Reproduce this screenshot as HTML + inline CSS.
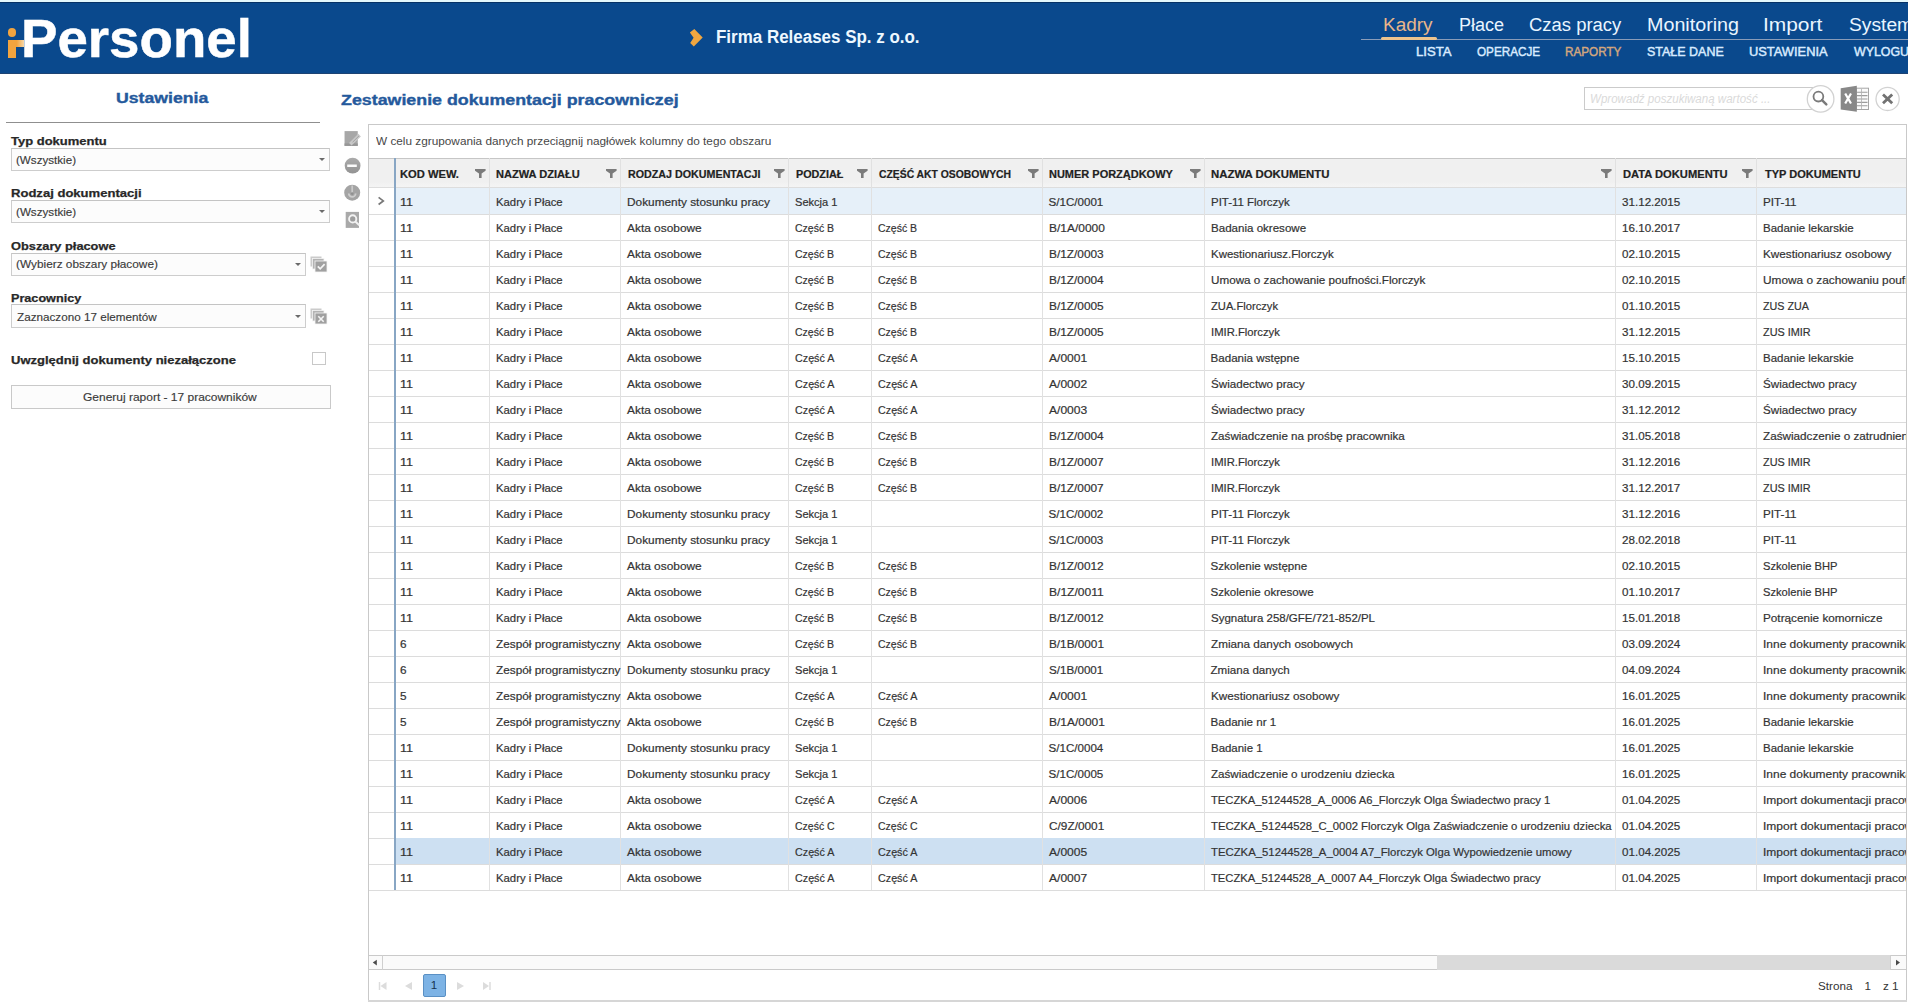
<!DOCTYPE html><html><head><meta charset="utf-8"><style>*{margin:0;padding:0;box-sizing:border-box}
html,body{width:1908px;height:1002px;overflow:hidden;background:#fff;font-family:"Liberation Sans",sans-serif}
body>div,body>svg{position:absolute}
.tx{position:absolute;height:0;line-height:0;white-space:nowrap}
.tx span{position:absolute;left:0;top:0;line-height:0;white-space:nowrap}
</style></head><body>
<div style="left:0;top:0;width:1908px;height:2px;background:#e4f8fc"></div>
<div style="left:0;top:2px;width:1908px;height:72px;background:#0a498d"></div>
<div style="left:0;top:2px;width:1908px;height:1px;background:#063266"></div>
<div style="left:0;top:73px;width:1908px;height:1px;background:#1d4373"></div>
<div style="left:7.5px;top:28.2px;width:8.4px;height:8.4px;border-radius:50%;background:#f2a43f"></div>
<div style="left:7.7px;top:40px;width:8.1px;height:17.7px;background:#f2a43f"></div>
<div style="left:7.7px;top:40px;width:16.5px;height:6.5px;background:linear-gradient(90deg,#f2a43f 55%,#f6d7a8)"></div>
<div class="tx" style="left:20.68px;top:38.62px;font-size:54.5px;font-weight:bold;font-style:normal;color:#ffffff;-webkit-text-stroke:0.5px #ffffff;transform:scaleX(1.0027);transform-origin:0 0"><span>Personel</span></div>
<svg style="position:absolute;left:689px;top:28px" width="15" height="20" viewBox="0 0 15 20"><path d="M0.9 4.4 L5.3 1.0 L13.7 9.6 L4.8 18.6 L1.2 15 L4.6 9.7 Z" fill="#f0a640"/></svg>
<div class="tx" style="left:716.34px;top:37.00px;font-size:18.75px;font-weight:bold;font-style:normal;color:#eef8ff;transform:scaleX(0.9044);transform-origin:0 0"><span>Firma Releases Sp. z o.o.</span></div>
<div class="tx" style="left:1383.02px;top:24.66px;font-size:18px;font-weight:normal;font-style:normal;color:#e8b68a;transform:scaleX(1.0545);transform-origin:0 0"><span>Kadry</span></div>
<div class="tx" style="left:1458.59px;top:24.66px;font-size:18px;font-weight:normal;font-style:normal;color:#e9f5ff;transform:scaleX(1.0026);transform-origin:0 0"><span>Płace</span></div>
<div class="tx" style="left:1529.24px;top:24.66px;font-size:18px;font-weight:normal;font-style:normal;color:#e9f5ff;transform:scaleX(1.0249);transform-origin:0 0"><span>Czas pracy</span></div>
<div class="tx" style="left:1647.06px;top:24.66px;font-size:18px;font-weight:normal;font-style:normal;color:#e9f5ff;transform:scaleX(1.0953);transform-origin:0 0"><span>Monitoring</span></div>
<div class="tx" style="left:1763.37px;top:24.66px;font-size:18px;font-weight:normal;font-style:normal;color:#e9f5ff;transform:scaleX(1.1617);transform-origin:0 0"><span>Import</span></div>
<div class="tx" style="left:1848.60px;top:24.66px;font-size:18px;font-weight:normal;font-style:normal;color:#e9f5ff;transform:scaleX(1.0678);transform-origin:0 0"><span>System</span></div>
<div style="left:1361px;top:38.5px;width:547px;height:1px;background:#8a9cb8"></div>
<div style="left:1380.5px;top:37px;width:56px;height:3px;background:#eec48e;border-radius:1.5px"></div>
<div class="tx" style="left:1415.97px;top:52.13px;font-size:12.9px;font-weight:normal;font-style:normal;color:#d9ebff;-webkit-text-stroke:0.45px #d9ebff;transform:scaleX(1.0193);transform-origin:0 0"><span>LISTA</span></div>
<div class="tx" style="left:1476.85px;top:52.13px;font-size:12.9px;font-weight:normal;font-style:normal;color:#d9ebff;-webkit-text-stroke:0.45px #d9ebff;transform:scaleX(0.9095);transform-origin:0 0"><span>OPERACJE</span></div>
<div class="tx" style="left:1565.08px;top:52.13px;font-size:12.9px;font-weight:normal;font-style:normal;color:#d3a77e;-webkit-text-stroke:0.45px #d3a77e;transform:scaleX(0.9085);transform-origin:0 0"><span>RAPORTY</span></div>
<div class="tx" style="left:1647.31px;top:52.13px;font-size:12.9px;font-weight:normal;font-style:normal;color:#d9ebff;-webkit-text-stroke:0.45px #d9ebff;transform:scaleX(0.9682);transform-origin:0 0"><span>STAŁE DANE</span></div>
<div class="tx" style="left:1748.80px;top:52.13px;font-size:12.9px;font-weight:normal;font-style:normal;color:#d9ebff;-webkit-text-stroke:0.45px #d9ebff;transform:scaleX(0.9975);transform-origin:0 0"><span>USTAWIENIA</span></div>
<div class="tx" style="left:1854.20px;top:52.13px;font-size:12.9px;font-weight:normal;font-style:normal;color:#d9ebff;-webkit-text-stroke:0.45px #d9ebff;transform:scaleX(0.9606);transform-origin:0 0"><span>WYLOGUJ</span></div>
<div class="tx" style="left:116.37px;top:97.71px;font-size:14.4px;font-weight:bold;font-style:normal;color:#24599c;-webkit-text-stroke:0.35px #24599c;transform:scaleX(1.2285);transform-origin:0 0"><span>Ustawienia</span></div>
<div style="left:6px;top:122px;width:314px;height:1px;background:#8f8f8f"></div>
<div class="tx" style="left:11.40px;top:141.02px;font-size:11.2px;font-weight:bold;font-style:normal;color:#282828;-webkit-text-stroke:0.25px #282828;transform:scaleX(1.1610);transform-origin:0 0"><span>Typ dokumentu</span></div>
<div class="tx" style="left:10.58px;top:193.12px;font-size:11.2px;font-weight:bold;font-style:normal;color:#282828;-webkit-text-stroke:0.25px #282828;transform:scaleX(1.1667);transform-origin:0 0"><span>Rodzaj dokumentacji</span></div>
<div class="tx" style="left:11.00px;top:245.92px;font-size:11.2px;font-weight:bold;font-style:normal;color:#282828;-webkit-text-stroke:0.25px #282828;transform:scaleX(1.1433);transform-origin:0 0"><span>Obszary płacowe</span></div>
<div class="tx" style="left:10.61px;top:297.92px;font-size:11.2px;font-weight:bold;font-style:normal;color:#282828;-webkit-text-stroke:0.25px #282828;transform:scaleX(1.1295);transform-origin:0 0"><span>Pracownicy</span></div>
<div class="tx" style="left:10.79px;top:360.02px;font-size:11.2px;font-weight:bold;font-style:normal;color:#282828;-webkit-text-stroke:0.25px #282828;transform:scaleX(1.1637);transform-origin:0 0"><span>Uwzględnij dokumenty niezałączone</span></div>
<div style="left:10.5px;top:148px;width:319.8px;height:23.400000000000006px;border:1px solid #cdcdcd;border-top-color:#c4c4c4;background:#fcfcfc"></div>
<div class="tx" style="left:16.46px;top:159.81px;font-size:11.8px;font-weight:normal;font-style:normal;color:#3a3a3a;-webkit-text-stroke:0.15px #3a3a3a;transform:scaleX(0.9850);transform-origin:0 0"><span>(Wszystkie)</span></div>
<div style="left:319.3px;top:158.2px;width:0;height:0;border-left:3px solid transparent;border-right:3px solid transparent;border-top:3px solid #6a6a6a"></div>
<div style="left:10.5px;top:199.9px;width:319.8px;height:23.5px;border:1px solid #cdcdcd;border-top-color:#c4c4c4;background:#fcfcfc"></div>
<div class="tx" style="left:16.45px;top:212.41px;font-size:11.8px;font-weight:normal;font-style:normal;color:#3a3a3a;-webkit-text-stroke:0.15px #3a3a3a;transform:scaleX(0.9867);transform-origin:0 0"><span>(Wszystkie)</span></div>
<div style="left:319.3px;top:210.15px;width:0;height:0;border-left:3px solid transparent;border-right:3px solid transparent;border-top:3px solid #6a6a6a"></div>
<div style="left:10.5px;top:252.6px;width:295.5px;height:23.299999999999983px;border:1px solid #cdcdcd;border-top-color:#c4c4c4;background:#fcfcfc"></div>
<div class="tx" style="left:16.45px;top:264.21px;font-size:11.8px;font-weight:normal;font-style:normal;color:#3a3a3a;-webkit-text-stroke:0.15px #3a3a3a;transform:scaleX(1.0030);transform-origin:0 0"><span>(Wybierz obszary płacowe)</span></div>
<div style="left:295px;top:262.75px;width:0;height:0;border-left:3px solid transparent;border-right:3px solid transparent;border-top:3px solid #6a6a6a"></div>
<div style="left:10.5px;top:304.4px;width:295.5px;height:24.100000000000023px;border:1px solid #cdcdcd;border-top-color:#c4c4c4;background:#fcfcfc"></div>
<div class="tx" style="left:16.63px;top:317.21px;font-size:11.8px;font-weight:normal;font-style:normal;color:#3a3a3a;-webkit-text-stroke:0.15px #3a3a3a;transform:scaleX(0.9914);transform-origin:0 0"><span>Zaznaczono 17 elementów</span></div>
<div style="left:295px;top:314.95px;width:0;height:0;border-left:3px solid transparent;border-right:3px solid transparent;border-top:3px solid #6a6a6a"></div>
<div style="left:312.3px;top:352.3px;width:13.5px;height:13px;border:1px solid #c8c8c8;background:#fff"></div>
<div style="left:10.5px;top:384.6px;width:320px;height:24px;border:1px solid #c9c9c9;background:#fcfcfc"></div>
<div class="tx" style="left:83.04px;top:396.88px;font-size:11.6px;font-weight:normal;font-style:normal;color:#3a3a3a;-webkit-text-stroke:0.15px #3a3a3a;transform:scaleX(1.0329);transform-origin:0 0"><span>Generuj raport - 17 pracowników</span></div>
<svg style="position:absolute;left:310px;top:255.5px" width="18" height="17" viewBox="0 0 18 17"><rect x="0.5" y="0.5" width="11" height="10" fill="#cbcbcb"/><rect x="2.5" y="2.5" width="11.5" height="10.5" fill="#b3b3b3" stroke="#f4f4f4" stroke-width="0.8"/><rect x="5" y="5" width="12" height="11" fill="#a0a0a0" stroke="#f4f4f4" stroke-width="0.8"/><path d="M7.8 10.3 L10.2 12.8 L14.6 8.2" stroke="#f4f4f4" stroke-width="1.7" fill="none"/></svg>
<svg style="position:absolute;left:310px;top:307.5px" width="18" height="17" viewBox="0 0 18 17"><rect x="0.5" y="0.5" width="11" height="10" fill="#cbcbcb"/><rect x="2.5" y="2.5" width="11.5" height="10.5" fill="#b3b3b3" stroke="#f4f4f4" stroke-width="0.8"/><rect x="5" y="5" width="12" height="11" fill="#a0a0a0" stroke="#f4f4f4" stroke-width="0.8"/><path d="M8.3 8.3 L13.7 13.7 M13.7 8.3 L8.3 13.7" stroke="#f4f4f4" stroke-width="1.6" fill="none"/></svg>
<div class="tx" style="left:340.92px;top:99.91px;font-size:14.1px;font-weight:bold;font-style:normal;color:#24599c;-webkit-text-stroke:0.35px #24599c;transform:scaleX(1.2640);transform-origin:0 0"><span>Zestawienie dokumentacji pracowniczej</span></div>
<svg style="position:absolute;left:344px;top:130px" width="17" height="18" viewBox="0 0 17 18"><rect x="0.55" y="1.1" width="13.2" height="14.8" fill="#a7a7a7"/><rect x="0.55" y="13.4" width="13.2" height="2.5" fill="#979797"/><path d="M6.3 14.3 L15.6 5.1" stroke="#c8c8c8" stroke-width="3.6"/><path d="M8.6 12.2 L15 5.9" stroke="#a2a2a2" stroke-width="1"/></svg>
<svg style="position:absolute;left:344px;top:157px" width="17" height="17" viewBox="0 0 17 17"><defs><linearGradient id="gm" x1="0" y1="0" x2="0" y2="1"><stop offset="0" stop-color="#ababab"/><stop offset="1" stop-color="#939393"/></linearGradient></defs><circle cx="8.6" cy="8.7" r="7.9" fill="url(#gm)"/><rect x="3.2" y="7.5" width="9.6" height="2.5" fill="#fbfbfb"/></svg>
<svg style="position:absolute;left:344px;top:184px" width="17" height="18" viewBox="0 0 17 18"><circle cx="8.2" cy="8.7" r="8" fill="#a4a4a4"/><path d="M8.2 1.5 V9.5" stroke="#c9c9c9" stroke-width="1.7"/><path d="M4.8 9.5 A3.4 3.4 0 0 0 11.6 9.5" stroke="#cdcdcd" stroke-width="1.8" fill="none"/><circle cx="8.2" cy="9.6" r="1.3" fill="#8f8f8f"/></svg>
<svg style="position:absolute;left:345px;top:211px" width="17" height="18" viewBox="0 0 17 18"><rect x="0.7" y="0.9" width="13.3" height="16" fill="#a9a9a9"/><circle cx="7.7" cy="7.9" r="3.6" stroke="#f2f2f2" stroke-width="1.9" fill="#9d9d9d"/><path d="M10.3 10.6 L14.3 14.3" stroke="#f2f2f2" stroke-width="2"/></svg>
<div style="left:1584.2px;top:87px;width:236px;height:23.3px;border:1px solid #cbcbcb;background:#fff"></div>
<div class="tx" style="left:1589.60px;top:99.34px;font-size:12px;font-weight:normal;font-style:italic;color:#dadada;transform:scaleX(0.9632);transform-origin:0 0"><span>Wprowadź poszukiwaną wartość ...</span></div>
<svg style="position:absolute;left:1805px;top:83px" width="32" height="32" viewBox="0 0 32 32"><circle cx="15.6" cy="15.9" r="13.3" fill="#fff" stroke="#d2d2d2" stroke-width="1.3"/><circle cx="13.4" cy="13.6" r="4.9" stroke="#7a7a7a" stroke-width="1.8" fill="none"/><path d="M17 17.2 L21.3 21.4" stroke="#7a7a7a" stroke-width="2.5" stroke-linecap="round"/></svg>
<svg style="position:absolute;left:1838px;top:83px" width="34" height="32" viewBox="0 0 34 32"><rect x="18.5" y="5.2" width="12" height="21.3" fill="#fbfbfb" stroke="#a5a5a5" stroke-width="1"/><path d="M19 9.2 H29.5 M19 12.6 H29.5 M19 16 H29.5 M19 19.4 H29.5 M19 22.8 H29.5" stroke="#9c9c9c" stroke-width="1.1"/><path d="M23.5 6 V26" stroke="#b0b0b0" stroke-width="0.8"/><path d="M2.7 5.2 L18.8 2.7 L18.8 28.7 L2.7 26.5 Z" fill="#888"/><path d="M7.2 10.5 L13 20.5 M13 10.5 L7.2 20.5" stroke="#fff" stroke-width="2.2"/></svg>
<svg style="position:absolute;left:1873px;top:85px" width="30" height="28" viewBox="0 0 30 28"><circle cx="14.6" cy="13.9" r="11.6" fill="#fff" stroke="#d2d2d2" stroke-width="1.3"/><path d="M10 9.5 L19.2 18.3 M19.2 9.5 L10 18.3" stroke="#727272" stroke-width="2.8"/></svg>
<div style="left:367.6px;top:124.1px;width:1539.2px;height:877.9px;border:1.3px solid #c9c9c9;border-bottom:none;background:#fff"></div>
<div class="tx" style="left:376.30px;top:140.99px;font-size:11px;font-weight:normal;font-style:normal;color:#474747;transform:scaleX(1.0720);transform-origin:0 0"><span>W celu zgrupowania danych przeciągnij nagłówek kolumny do tego obszaru</span></div>
<div style="left:369px;top:158.4px;width:1537px;height:29.599999999999994px;background:linear-gradient(#f0f0f0 0,#f0f0f0 78%,#f5f5f5 100%)"></div>
<div style="left:369px;top:157.8px;width:1537px;height:1.2px;background:#c6c6c6"></div>
<div style="left:369px;top:187.4px;width:1537px;height:1px;background:#dddddd"></div>
<div class="tx" style="left:400.20px;top:174.03px;font-size:10.6px;font-weight:bold;font-style:normal;color:#222222;-webkit-text-stroke:0.2px #222222;transform:scaleX(1.0540);transform-origin:0 0"><span>KOD WEW.</span></div>
<svg style="position:absolute;left:475px;top:168.8px" width="11" height="9.2" viewBox="0 0 11 9.2"><path d="M0 0 H10.6 V1.8 L6.6 4.6 V9.2 H4 V4.6 L0 1.8 Z" fill="#7b7b7b"/></svg>
<div class="tx" style="left:496.31px;top:174.03px;font-size:10.6px;font-weight:bold;font-style:normal;color:#222222;-webkit-text-stroke:0.2px #222222;transform:scaleX(1.0444);transform-origin:0 0"><span>NAZWA DZIAŁU</span></div>
<svg style="position:absolute;left:606px;top:168.8px" width="11" height="9.2" viewBox="0 0 11 9.2"><path d="M0 0 H10.6 V1.8 L6.6 4.6 V9.2 H4 V4.6 L0 1.8 Z" fill="#7b7b7b"/></svg>
<div class="tx" style="left:627.83px;top:174.03px;font-size:10.6px;font-weight:bold;font-style:normal;color:#222222;-webkit-text-stroke:0.2px #222222;transform:scaleX(1.0112);transform-origin:0 0"><span>RODZAJ DOKUMENTACJI</span></div>
<svg style="position:absolute;left:774px;top:168.8px" width="11" height="9.2" viewBox="0 0 11 9.2"><path d="M0 0 H10.6 V1.8 L6.6 4.6 V9.2 H4 V4.6 L0 1.8 Z" fill="#7b7b7b"/></svg>
<div class="tx" style="left:795.73px;top:174.03px;font-size:10.6px;font-weight:bold;font-style:normal;color:#222222;-webkit-text-stroke:0.2px #222222;transform:scaleX(1.0180);transform-origin:0 0"><span>PODZIAŁ</span></div>
<svg style="position:absolute;left:857px;top:168.8px" width="11" height="9.2" viewBox="0 0 11 9.2"><path d="M0 0 H10.6 V1.8 L6.6 4.6 V9.2 H4 V4.6 L0 1.8 Z" fill="#7b7b7b"/></svg>
<div class="tx" style="left:879.08px;top:174.03px;font-size:10.6px;font-weight:bold;font-style:normal;color:#222222;-webkit-text-stroke:0.2px #222222;transform:scaleX(0.9783);transform-origin:0 0"><span>CZĘŚĆ AKT OSOBOWYCH</span></div>
<svg style="position:absolute;left:1028px;top:168.8px" width="11" height="9.2" viewBox="0 0 11 9.2"><path d="M0 0 H10.6 V1.8 L6.6 4.6 V9.2 H4 V4.6 L0 1.8 Z" fill="#7b7b7b"/></svg>
<div class="tx" style="left:1048.71px;top:174.03px;font-size:10.6px;font-weight:bold;font-style:normal;color:#222222;-webkit-text-stroke:0.2px #222222;transform:scaleX(1.0365);transform-origin:0 0"><span>NUMER PORZĄDKOWY</span></div>
<svg style="position:absolute;left:1190px;top:168.8px" width="11" height="9.2" viewBox="0 0 11 9.2"><path d="M0 0 H10.6 V1.8 L6.6 4.6 V9.2 H4 V4.6 L0 1.8 Z" fill="#7b7b7b"/></svg>
<div class="tx" style="left:1211.49px;top:174.03px;font-size:10.6px;font-weight:bold;font-style:normal;color:#222222;-webkit-text-stroke:0.2px #222222;transform:scaleX(1.0748);transform-origin:0 0"><span>NAZWA DOKUMENTU</span></div>
<svg style="position:absolute;left:1601px;top:168.8px" width="11" height="9.2" viewBox="0 0 11 9.2"><path d="M0 0 H10.6 V1.8 L6.6 4.6 V9.2 H4 V4.6 L0 1.8 Z" fill="#7b7b7b"/></svg>
<div class="tx" style="left:1622.80px;top:174.03px;font-size:10.6px;font-weight:bold;font-style:normal;color:#222222;-webkit-text-stroke:0.2px #222222;transform:scaleX(1.0537);transform-origin:0 0"><span>DATA DOKUMENTU</span></div>
<svg style="position:absolute;left:1742px;top:168.8px" width="11" height="9.2" viewBox="0 0 11 9.2"><path d="M0 0 H10.6 V1.8 L6.6 4.6 V9.2 H4 V4.6 L0 1.8 Z" fill="#7b7b7b"/></svg>
<div class="tx" style="left:1764.50px;top:174.03px;font-size:10.6px;font-weight:bold;font-style:normal;color:#222222;-webkit-text-stroke:0.2px #222222;transform:scaleX(1.0389);transform-origin:0 0"><span>TYP DOKUMENTU</span></div>
<div style="left:396px;top:188.0px;width:1510px;height:26.0px;background:#e6f0f9"></div>
<div style="left:369px;top:214.0px;width:1537px;height:1px;background:#dcdcdc"></div>
<div style="left:369px;top:240.0px;width:1537px;height:1px;background:#dcdcdc"></div>
<div style="left:369px;top:266.0px;width:1537px;height:1px;background:#dcdcdc"></div>
<div style="left:369px;top:292.0px;width:1537px;height:1px;background:#dcdcdc"></div>
<div style="left:369px;top:318.0px;width:1537px;height:1px;background:#dcdcdc"></div>
<div style="left:369px;top:344.0px;width:1537px;height:1px;background:#dcdcdc"></div>
<div style="left:369px;top:370.0px;width:1537px;height:1px;background:#dcdcdc"></div>
<div style="left:369px;top:396.0px;width:1537px;height:1px;background:#dcdcdc"></div>
<div style="left:369px;top:422.0px;width:1537px;height:1px;background:#dcdcdc"></div>
<div style="left:369px;top:448.0px;width:1537px;height:1px;background:#dcdcdc"></div>
<div style="left:369px;top:474.0px;width:1537px;height:1px;background:#dcdcdc"></div>
<div style="left:369px;top:500.0px;width:1537px;height:1px;background:#dcdcdc"></div>
<div style="left:369px;top:526.0px;width:1537px;height:1px;background:#dcdcdc"></div>
<div style="left:369px;top:552.0px;width:1537px;height:1px;background:#dcdcdc"></div>
<div style="left:369px;top:578.0px;width:1537px;height:1px;background:#dcdcdc"></div>
<div style="left:369px;top:604.0px;width:1537px;height:1px;background:#dcdcdc"></div>
<div style="left:369px;top:630.0px;width:1537px;height:1px;background:#dcdcdc"></div>
<div style="left:369px;top:656.0px;width:1537px;height:1px;background:#dcdcdc"></div>
<div style="left:369px;top:682.0px;width:1537px;height:1px;background:#dcdcdc"></div>
<div style="left:369px;top:708.0px;width:1537px;height:1px;background:#dcdcdc"></div>
<div style="left:369px;top:734.0px;width:1537px;height:1px;background:#dcdcdc"></div>
<div style="left:369px;top:760.0px;width:1537px;height:1px;background:#dcdcdc"></div>
<div style="left:369px;top:786.0px;width:1537px;height:1px;background:#dcdcdc"></div>
<div style="left:369px;top:812.0px;width:1537px;height:1px;background:#dcdcdc"></div>
<div style="left:369px;top:838.0px;width:1537px;height:1px;background:#dcdcdc"></div>
<div style="left:396px;top:838.0px;width:1510px;height:26.0px;background:#cde0f2"></div>
<div style="left:369px;top:864.0px;width:1537px;height:1px;background:#dcdcdc"></div>
<div style="left:369px;top:890.0px;width:1537px;height:1px;background:#dcdcdc"></div>
<div style="left:489px;top:158.4px;width:1px;height:731.6px;background:#e1e1e1"></div>
<div style="left:620px;top:158.4px;width:1px;height:731.6px;background:#e1e1e1"></div>
<div style="left:788px;top:158.4px;width:1px;height:731.6px;background:#e1e1e1"></div>
<div style="left:871px;top:158.4px;width:1px;height:731.6px;background:#e1e1e1"></div>
<div style="left:1042px;top:158.4px;width:1px;height:731.6px;background:#e1e1e1"></div>
<div style="left:1204px;top:158.4px;width:1px;height:731.6px;background:#e1e1e1"></div>
<div style="left:1615px;top:158.4px;width:1px;height:731.6px;background:#e1e1e1"></div>
<div style="left:1756px;top:158.4px;width:1px;height:731.6px;background:#e1e1e1"></div>
<div style="left:394.3px;top:158.4px;width:1.6px;height:731.6px;background:#88a6c4"></div>
<svg style="position:absolute;left:377px;top:195.8px" width="9" height="10" viewBox="0 0 9 10"><path d="M1.6 1.3 L6.3 4.9 L1.6 8.5" stroke="#787878" stroke-width="1.7" fill="none"/></svg>
<div style="left:395px;top:188.0px;width:95px;height:26.0px;overflow:hidden"><div class="tx" style="left:4.60px;top:14.08px;font-size:11.6px;font-weight:normal;font-style:normal;color:#333333;-webkit-text-stroke:0.2px #333;transform:scaleX(1.0883);transform-origin:0 0"><span>11</span></div></div>
<div style="left:490px;top:188.0px;width:131px;height:26.0px;overflow:hidden"><div class="tx" style="left:5.50px;top:14.08px;font-size:11.6px;font-weight:normal;font-style:normal;color:#333333;-webkit-text-stroke:0.2px #333;transform:scaleX(0.9759);transform-origin:0 0"><span>Kadry i Płace</span></div></div>
<div style="left:621px;top:188.0px;width:168px;height:26.0px;overflow:hidden"><div class="tx" style="left:5.50px;top:14.08px;font-size:11.6px;font-weight:normal;font-style:normal;color:#333333;-webkit-text-stroke:0.2px #333;transform:scaleX(1.0214);transform-origin:0 0"><span>Dokumenty stosunku pracy</span></div></div>
<div style="left:789px;top:188.0px;width:83px;height:26.0px;overflow:hidden"><div class="tx" style="left:5.50px;top:14.08px;font-size:11.6px;font-weight:normal;font-style:normal;color:#333333;-webkit-text-stroke:0.2px #333;transform:scaleX(0.9551);transform-origin:0 0"><span>Sekcja 1</span></div></div>
<div style="left:1043px;top:188.0px;width:162px;height:26.0px;overflow:hidden"><div class="tx" style="left:5.50px;top:14.08px;font-size:11.6px;font-weight:normal;font-style:normal;color:#333333;-webkit-text-stroke:0.2px #333"><span>S/1C/0001</span></div></div>
<div style="left:1205px;top:188.0px;width:411px;height:26.0px;overflow:hidden"><div class="tx" style="left:5.50px;top:14.08px;font-size:11.6px;font-weight:normal;font-style:normal;color:#333333;-webkit-text-stroke:0.2px #333;transform:scaleX(0.9880);transform-origin:0 0"><span>PIT-11 Florczyk</span></div></div>
<div style="left:1616px;top:188.0px;width:141px;height:26.0px;overflow:hidden"><div class="tx" style="left:5.50px;top:14.08px;font-size:11.6px;font-weight:normal;font-style:normal;color:#333333;-webkit-text-stroke:0.2px #333;transform:scaleX(1.0033);transform-origin:0 0"><span>31.12.2015</span></div></div>
<div style="left:1757px;top:188.0px;width:149px;height:26.0px;overflow:hidden"><div class="tx" style="left:5.50px;top:14.08px;font-size:11.6px;font-weight:normal;font-style:normal;color:#333333;-webkit-text-stroke:0.2px #333;transform:scaleX(1.0059);transform-origin:0 0"><span>PIT-11</span></div></div>
<div style="left:395px;top:214.0px;width:95px;height:26.0px;overflow:hidden"><div class="tx" style="left:4.60px;top:14.08px;font-size:11.6px;font-weight:normal;font-style:normal;color:#333333;-webkit-text-stroke:0.2px #333;transform:scaleX(1.0883);transform-origin:0 0"><span>11</span></div></div>
<div style="left:490px;top:214.0px;width:131px;height:26.0px;overflow:hidden"><div class="tx" style="left:5.50px;top:14.08px;font-size:11.6px;font-weight:normal;font-style:normal;color:#333333;-webkit-text-stroke:0.2px #333;transform:scaleX(0.9759);transform-origin:0 0"><span>Kadry i Płace</span></div></div>
<div style="left:621px;top:214.0px;width:168px;height:26.0px;overflow:hidden"><div class="tx" style="left:5.50px;top:14.08px;font-size:11.6px;font-weight:normal;font-style:normal;color:#333333;-webkit-text-stroke:0.2px #333;transform:scaleX(1.0260);transform-origin:0 0"><span>Akta osobowe</span></div></div>
<div style="left:789px;top:214.0px;width:83px;height:26.0px;overflow:hidden"><div class="tx" style="left:5.50px;top:14.08px;font-size:11.6px;font-weight:normal;font-style:normal;color:#333333;-webkit-text-stroke:0.2px #333;transform:scaleX(0.9062);transform-origin:0 0"><span>Część B</span></div></div>
<div style="left:872px;top:214.0px;width:171px;height:26.0px;overflow:hidden"><div class="tx" style="left:5.50px;top:14.08px;font-size:11.6px;font-weight:normal;font-style:normal;color:#333333;-webkit-text-stroke:0.2px #333;transform:scaleX(0.9062);transform-origin:0 0"><span>Część B</span></div></div>
<div style="left:1043px;top:214.0px;width:162px;height:26.0px;overflow:hidden"><div class="tx" style="left:5.50px;top:14.08px;font-size:11.6px;font-weight:normal;font-style:normal;color:#333333;-webkit-text-stroke:0.2px #333;transform:scaleX(1.0308);transform-origin:0 0"><span>B/1A/0000</span></div></div>
<div style="left:1205px;top:214.0px;width:411px;height:26.0px;overflow:hidden"><div class="tx" style="left:5.50px;top:14.08px;font-size:11.6px;font-weight:normal;font-style:normal;color:#333333;-webkit-text-stroke:0.2px #333;transform:scaleX(0.9969);transform-origin:0 0"><span>Badania okresowe</span></div></div>
<div style="left:1616px;top:214.0px;width:141px;height:26.0px;overflow:hidden"><div class="tx" style="left:5.50px;top:14.08px;font-size:11.6px;font-weight:normal;font-style:normal;color:#333333;-webkit-text-stroke:0.2px #333;transform:scaleX(1.0033);transform-origin:0 0"><span>16.10.2017</span></div></div>
<div style="left:1757px;top:214.0px;width:149px;height:26.0px;overflow:hidden"><div class="tx" style="left:5.50px;top:14.08px;font-size:11.6px;font-weight:normal;font-style:normal;color:#333333;-webkit-text-stroke:0.2px #333;transform:scaleX(0.9900);transform-origin:0 0"><span>Badanie lekarskie</span></div></div>
<div style="left:395px;top:240.0px;width:95px;height:26.0px;overflow:hidden"><div class="tx" style="left:4.60px;top:14.08px;font-size:11.6px;font-weight:normal;font-style:normal;color:#333333;-webkit-text-stroke:0.2px #333;transform:scaleX(1.0883);transform-origin:0 0"><span>11</span></div></div>
<div style="left:490px;top:240.0px;width:131px;height:26.0px;overflow:hidden"><div class="tx" style="left:5.50px;top:14.08px;font-size:11.6px;font-weight:normal;font-style:normal;color:#333333;-webkit-text-stroke:0.2px #333;transform:scaleX(0.9759);transform-origin:0 0"><span>Kadry i Płace</span></div></div>
<div style="left:621px;top:240.0px;width:168px;height:26.0px;overflow:hidden"><div class="tx" style="left:5.50px;top:14.08px;font-size:11.6px;font-weight:normal;font-style:normal;color:#333333;-webkit-text-stroke:0.2px #333;transform:scaleX(1.0260);transform-origin:0 0"><span>Akta osobowe</span></div></div>
<div style="left:789px;top:240.0px;width:83px;height:26.0px;overflow:hidden"><div class="tx" style="left:5.50px;top:14.08px;font-size:11.6px;font-weight:normal;font-style:normal;color:#333333;-webkit-text-stroke:0.2px #333;transform:scaleX(0.9062);transform-origin:0 0"><span>Część B</span></div></div>
<div style="left:872px;top:240.0px;width:171px;height:26.0px;overflow:hidden"><div class="tx" style="left:5.50px;top:14.08px;font-size:11.6px;font-weight:normal;font-style:normal;color:#333333;-webkit-text-stroke:0.2px #333;transform:scaleX(0.9062);transform-origin:0 0"><span>Część B</span></div></div>
<div style="left:1043px;top:240.0px;width:162px;height:26.0px;overflow:hidden"><div class="tx" style="left:5.50px;top:14.08px;font-size:11.6px;font-weight:normal;font-style:normal;color:#333333;-webkit-text-stroke:0.2px #333;transform:scaleX(1.0226);transform-origin:0 0"><span>B/1Z/0003</span></div></div>
<div style="left:1205px;top:240.0px;width:411px;height:26.0px;overflow:hidden"><div class="tx" style="left:5.50px;top:14.08px;font-size:11.6px;font-weight:normal;font-style:normal;color:#333333;-webkit-text-stroke:0.2px #333;transform:scaleX(0.9869);transform-origin:0 0"><span>Kwestionariusz.Florczyk</span></div></div>
<div style="left:1616px;top:240.0px;width:141px;height:26.0px;overflow:hidden"><div class="tx" style="left:5.50px;top:14.08px;font-size:11.6px;font-weight:normal;font-style:normal;color:#333333;-webkit-text-stroke:0.2px #333;transform:scaleX(1.0033);transform-origin:0 0"><span>02.10.2015</span></div></div>
<div style="left:1757px;top:240.0px;width:149px;height:26.0px;overflow:hidden"><div class="tx" style="left:5.50px;top:14.08px;font-size:11.6px;font-weight:normal;font-style:normal;color:#333333;-webkit-text-stroke:0.2px #333;transform:scaleX(1.0105);transform-origin:0 0"><span>Kwestionariusz osobowy</span></div></div>
<div style="left:395px;top:266.0px;width:95px;height:26.0px;overflow:hidden"><div class="tx" style="left:4.60px;top:14.08px;font-size:11.6px;font-weight:normal;font-style:normal;color:#333333;-webkit-text-stroke:0.2px #333;transform:scaleX(1.0883);transform-origin:0 0"><span>11</span></div></div>
<div style="left:490px;top:266.0px;width:131px;height:26.0px;overflow:hidden"><div class="tx" style="left:5.50px;top:14.08px;font-size:11.6px;font-weight:normal;font-style:normal;color:#333333;-webkit-text-stroke:0.2px #333;transform:scaleX(0.9759);transform-origin:0 0"><span>Kadry i Płace</span></div></div>
<div style="left:621px;top:266.0px;width:168px;height:26.0px;overflow:hidden"><div class="tx" style="left:5.50px;top:14.08px;font-size:11.6px;font-weight:normal;font-style:normal;color:#333333;-webkit-text-stroke:0.2px #333;transform:scaleX(1.0260);transform-origin:0 0"><span>Akta osobowe</span></div></div>
<div style="left:789px;top:266.0px;width:83px;height:26.0px;overflow:hidden"><div class="tx" style="left:5.50px;top:14.08px;font-size:11.6px;font-weight:normal;font-style:normal;color:#333333;-webkit-text-stroke:0.2px #333;transform:scaleX(0.9062);transform-origin:0 0"><span>Część B</span></div></div>
<div style="left:872px;top:266.0px;width:171px;height:26.0px;overflow:hidden"><div class="tx" style="left:5.50px;top:14.08px;font-size:11.6px;font-weight:normal;font-style:normal;color:#333333;-webkit-text-stroke:0.2px #333;transform:scaleX(0.9062);transform-origin:0 0"><span>Część B</span></div></div>
<div style="left:1043px;top:266.0px;width:162px;height:26.0px;overflow:hidden"><div class="tx" style="left:5.50px;top:14.08px;font-size:11.6px;font-weight:normal;font-style:normal;color:#333333;-webkit-text-stroke:0.2px #333;transform:scaleX(1.0226);transform-origin:0 0"><span>B/1Z/0004</span></div></div>
<div style="left:1205px;top:266.0px;width:411px;height:26.0px;overflow:hidden"><div class="tx" style="left:5.50px;top:14.08px;font-size:11.6px;font-weight:normal;font-style:normal;color:#333333;-webkit-text-stroke:0.2px #333;transform:scaleX(1.0075);transform-origin:0 0"><span>Umowa o zachowanie poufności.Florczyk</span></div></div>
<div style="left:1616px;top:266.0px;width:141px;height:26.0px;overflow:hidden"><div class="tx" style="left:5.50px;top:14.08px;font-size:11.6px;font-weight:normal;font-style:normal;color:#333333;-webkit-text-stroke:0.2px #333;transform:scaleX(1.0033);transform-origin:0 0"><span>02.10.2015</span></div></div>
<div style="left:1757px;top:266.0px;width:149px;height:26.0px;overflow:hidden"><div class="tx" style="left:5.50px;top:14.08px;font-size:11.6px;font-weight:normal;font-style:normal;color:#333333;-webkit-text-stroke:0.2px #333;transform:scaleX(1.0210);transform-origin:0 0"><span>Umowa o zachowaniu poufności</span></div></div>
<div style="left:395px;top:292.0px;width:95px;height:26.0px;overflow:hidden"><div class="tx" style="left:4.60px;top:14.08px;font-size:11.6px;font-weight:normal;font-style:normal;color:#333333;-webkit-text-stroke:0.2px #333;transform:scaleX(1.0883);transform-origin:0 0"><span>11</span></div></div>
<div style="left:490px;top:292.0px;width:131px;height:26.0px;overflow:hidden"><div class="tx" style="left:5.50px;top:14.08px;font-size:11.6px;font-weight:normal;font-style:normal;color:#333333;-webkit-text-stroke:0.2px #333;transform:scaleX(0.9759);transform-origin:0 0"><span>Kadry i Płace</span></div></div>
<div style="left:621px;top:292.0px;width:168px;height:26.0px;overflow:hidden"><div class="tx" style="left:5.50px;top:14.08px;font-size:11.6px;font-weight:normal;font-style:normal;color:#333333;-webkit-text-stroke:0.2px #333;transform:scaleX(1.0260);transform-origin:0 0"><span>Akta osobowe</span></div></div>
<div style="left:789px;top:292.0px;width:83px;height:26.0px;overflow:hidden"><div class="tx" style="left:5.50px;top:14.08px;font-size:11.6px;font-weight:normal;font-style:normal;color:#333333;-webkit-text-stroke:0.2px #333;transform:scaleX(0.9062);transform-origin:0 0"><span>Część B</span></div></div>
<div style="left:872px;top:292.0px;width:171px;height:26.0px;overflow:hidden"><div class="tx" style="left:5.50px;top:14.08px;font-size:11.6px;font-weight:normal;font-style:normal;color:#333333;-webkit-text-stroke:0.2px #333;transform:scaleX(0.9062);transform-origin:0 0"><span>Część B</span></div></div>
<div style="left:1043px;top:292.0px;width:162px;height:26.0px;overflow:hidden"><div class="tx" style="left:5.50px;top:14.08px;font-size:11.6px;font-weight:normal;font-style:normal;color:#333333;-webkit-text-stroke:0.2px #333;transform:scaleX(1.0226);transform-origin:0 0"><span>B/1Z/0005</span></div></div>
<div style="left:1205px;top:292.0px;width:411px;height:26.0px;overflow:hidden"><div class="tx" style="left:5.50px;top:14.08px;font-size:11.6px;font-weight:normal;font-style:normal;color:#333333;-webkit-text-stroke:0.2px #333;transform:scaleX(0.9638);transform-origin:0 0"><span>ZUA.Florczyk</span></div></div>
<div style="left:1616px;top:292.0px;width:141px;height:26.0px;overflow:hidden"><div class="tx" style="left:5.50px;top:14.08px;font-size:11.6px;font-weight:normal;font-style:normal;color:#333333;-webkit-text-stroke:0.2px #333;transform:scaleX(1.0033);transform-origin:0 0"><span>01.10.2015</span></div></div>
<div style="left:1757px;top:292.0px;width:149px;height:26.0px;overflow:hidden"><div class="tx" style="left:5.50px;top:14.08px;font-size:11.6px;font-weight:normal;font-style:normal;color:#333333;-webkit-text-stroke:0.2px #333;transform:scaleX(0.9254);transform-origin:0 0"><span>ZUS ZUA</span></div></div>
<div style="left:395px;top:318.0px;width:95px;height:26.0px;overflow:hidden"><div class="tx" style="left:4.60px;top:14.08px;font-size:11.6px;font-weight:normal;font-style:normal;color:#333333;-webkit-text-stroke:0.2px #333;transform:scaleX(1.0883);transform-origin:0 0"><span>11</span></div></div>
<div style="left:490px;top:318.0px;width:131px;height:26.0px;overflow:hidden"><div class="tx" style="left:5.50px;top:14.08px;font-size:11.6px;font-weight:normal;font-style:normal;color:#333333;-webkit-text-stroke:0.2px #333;transform:scaleX(0.9759);transform-origin:0 0"><span>Kadry i Płace</span></div></div>
<div style="left:621px;top:318.0px;width:168px;height:26.0px;overflow:hidden"><div class="tx" style="left:5.50px;top:14.08px;font-size:11.6px;font-weight:normal;font-style:normal;color:#333333;-webkit-text-stroke:0.2px #333;transform:scaleX(1.0260);transform-origin:0 0"><span>Akta osobowe</span></div></div>
<div style="left:789px;top:318.0px;width:83px;height:26.0px;overflow:hidden"><div class="tx" style="left:5.50px;top:14.08px;font-size:11.6px;font-weight:normal;font-style:normal;color:#333333;-webkit-text-stroke:0.2px #333;transform:scaleX(0.9062);transform-origin:0 0"><span>Część B</span></div></div>
<div style="left:872px;top:318.0px;width:171px;height:26.0px;overflow:hidden"><div class="tx" style="left:5.50px;top:14.08px;font-size:11.6px;font-weight:normal;font-style:normal;color:#333333;-webkit-text-stroke:0.2px #333;transform:scaleX(0.9062);transform-origin:0 0"><span>Część B</span></div></div>
<div style="left:1043px;top:318.0px;width:162px;height:26.0px;overflow:hidden"><div class="tx" style="left:5.50px;top:14.08px;font-size:11.6px;font-weight:normal;font-style:normal;color:#333333;-webkit-text-stroke:0.2px #333;transform:scaleX(1.0226);transform-origin:0 0"><span>B/1Z/0005</span></div></div>
<div style="left:1205px;top:318.0px;width:411px;height:26.0px;overflow:hidden"><div class="tx" style="left:5.50px;top:14.08px;font-size:11.6px;font-weight:normal;font-style:normal;color:#333333;-webkit-text-stroke:0.2px #333;transform:scaleX(0.9712);transform-origin:0 0"><span>IMIR.Florczyk</span></div></div>
<div style="left:1616px;top:318.0px;width:141px;height:26.0px;overflow:hidden"><div class="tx" style="left:5.50px;top:14.08px;font-size:11.6px;font-weight:normal;font-style:normal;color:#333333;-webkit-text-stroke:0.2px #333;transform:scaleX(1.0033);transform-origin:0 0"><span>31.12.2015</span></div></div>
<div style="left:1757px;top:318.0px;width:149px;height:26.0px;overflow:hidden"><div class="tx" style="left:5.50px;top:14.08px;font-size:11.6px;font-weight:normal;font-style:normal;color:#333333;-webkit-text-stroke:0.2px #333;transform:scaleX(0.9367);transform-origin:0 0"><span>ZUS IMIR</span></div></div>
<div style="left:395px;top:344.0px;width:95px;height:26.0px;overflow:hidden"><div class="tx" style="left:4.60px;top:14.08px;font-size:11.6px;font-weight:normal;font-style:normal;color:#333333;-webkit-text-stroke:0.2px #333;transform:scaleX(1.0883);transform-origin:0 0"><span>11</span></div></div>
<div style="left:490px;top:344.0px;width:131px;height:26.0px;overflow:hidden"><div class="tx" style="left:5.50px;top:14.08px;font-size:11.6px;font-weight:normal;font-style:normal;color:#333333;-webkit-text-stroke:0.2px #333;transform:scaleX(0.9759);transform-origin:0 0"><span>Kadry i Płace</span></div></div>
<div style="left:621px;top:344.0px;width:168px;height:26.0px;overflow:hidden"><div class="tx" style="left:5.50px;top:14.08px;font-size:11.6px;font-weight:normal;font-style:normal;color:#333333;-webkit-text-stroke:0.2px #333;transform:scaleX(1.0260);transform-origin:0 0"><span>Akta osobowe</span></div></div>
<div style="left:789px;top:344.0px;width:83px;height:26.0px;overflow:hidden"><div class="tx" style="left:5.50px;top:14.08px;font-size:11.6px;font-weight:normal;font-style:normal;color:#333333;-webkit-text-stroke:0.2px #333;transform:scaleX(0.9263);transform-origin:0 0"><span>Część A</span></div></div>
<div style="left:872px;top:344.0px;width:171px;height:26.0px;overflow:hidden"><div class="tx" style="left:5.50px;top:14.08px;font-size:11.6px;font-weight:normal;font-style:normal;color:#333333;-webkit-text-stroke:0.2px #333;transform:scaleX(0.9263);transform-origin:0 0"><span>Część A</span></div></div>
<div style="left:1043px;top:344.0px;width:162px;height:26.0px;overflow:hidden"><div class="tx" style="left:5.50px;top:14.08px;font-size:11.6px;font-weight:normal;font-style:normal;color:#333333;-webkit-text-stroke:0.2px #333;transform:scaleX(1.0386);transform-origin:0 0"><span>A/0001</span></div></div>
<div style="left:1205px;top:344.0px;width:411px;height:26.0px;overflow:hidden"><div class="tx" style="left:5.50px;top:14.08px;font-size:11.6px;font-weight:normal;font-style:normal;color:#333333;-webkit-text-stroke:0.2px #333"><span>Badania wstępne</span></div></div>
<div style="left:1616px;top:344.0px;width:141px;height:26.0px;overflow:hidden"><div class="tx" style="left:5.50px;top:14.08px;font-size:11.6px;font-weight:normal;font-style:normal;color:#333333;-webkit-text-stroke:0.2px #333;transform:scaleX(1.0033);transform-origin:0 0"><span>15.10.2015</span></div></div>
<div style="left:1757px;top:344.0px;width:149px;height:26.0px;overflow:hidden"><div class="tx" style="left:5.50px;top:14.08px;font-size:11.6px;font-weight:normal;font-style:normal;color:#333333;-webkit-text-stroke:0.2px #333;transform:scaleX(0.9900);transform-origin:0 0"><span>Badanie lekarskie</span></div></div>
<div style="left:395px;top:370.0px;width:95px;height:26.0px;overflow:hidden"><div class="tx" style="left:4.60px;top:14.08px;font-size:11.6px;font-weight:normal;font-style:normal;color:#333333;-webkit-text-stroke:0.2px #333;transform:scaleX(1.0883);transform-origin:0 0"><span>11</span></div></div>
<div style="left:490px;top:370.0px;width:131px;height:26.0px;overflow:hidden"><div class="tx" style="left:5.50px;top:14.08px;font-size:11.6px;font-weight:normal;font-style:normal;color:#333333;-webkit-text-stroke:0.2px #333;transform:scaleX(0.9759);transform-origin:0 0"><span>Kadry i Płace</span></div></div>
<div style="left:621px;top:370.0px;width:168px;height:26.0px;overflow:hidden"><div class="tx" style="left:5.50px;top:14.08px;font-size:11.6px;font-weight:normal;font-style:normal;color:#333333;-webkit-text-stroke:0.2px #333;transform:scaleX(1.0260);transform-origin:0 0"><span>Akta osobowe</span></div></div>
<div style="left:789px;top:370.0px;width:83px;height:26.0px;overflow:hidden"><div class="tx" style="left:5.50px;top:14.08px;font-size:11.6px;font-weight:normal;font-style:normal;color:#333333;-webkit-text-stroke:0.2px #333;transform:scaleX(0.9263);transform-origin:0 0"><span>Część A</span></div></div>
<div style="left:872px;top:370.0px;width:171px;height:26.0px;overflow:hidden"><div class="tx" style="left:5.50px;top:14.08px;font-size:11.6px;font-weight:normal;font-style:normal;color:#333333;-webkit-text-stroke:0.2px #333;transform:scaleX(0.9263);transform-origin:0 0"><span>Część A</span></div></div>
<div style="left:1043px;top:370.0px;width:162px;height:26.0px;overflow:hidden"><div class="tx" style="left:5.50px;top:14.08px;font-size:11.6px;font-weight:normal;font-style:normal;color:#333333;-webkit-text-stroke:0.2px #333;transform:scaleX(1.0386);transform-origin:0 0"><span>A/0002</span></div></div>
<div style="left:1205px;top:370.0px;width:411px;height:26.0px;overflow:hidden"><div class="tx" style="left:5.50px;top:14.08px;font-size:11.6px;font-weight:normal;font-style:normal;color:#333333;-webkit-text-stroke:0.2px #333;transform:scaleX(1.0024);transform-origin:0 0"><span>Świadectwo pracy</span></div></div>
<div style="left:1616px;top:370.0px;width:141px;height:26.0px;overflow:hidden"><div class="tx" style="left:5.50px;top:14.08px;font-size:11.6px;font-weight:normal;font-style:normal;color:#333333;-webkit-text-stroke:0.2px #333;transform:scaleX(1.0033);transform-origin:0 0"><span>30.09.2015</span></div></div>
<div style="left:1757px;top:370.0px;width:149px;height:26.0px;overflow:hidden"><div class="tx" style="left:5.50px;top:14.08px;font-size:11.6px;font-weight:normal;font-style:normal;color:#333333;-webkit-text-stroke:0.2px #333;transform:scaleX(1.0024);transform-origin:0 0"><span>Świadectwo pracy</span></div></div>
<div style="left:395px;top:396.0px;width:95px;height:26.0px;overflow:hidden"><div class="tx" style="left:4.60px;top:14.08px;font-size:11.6px;font-weight:normal;font-style:normal;color:#333333;-webkit-text-stroke:0.2px #333;transform:scaleX(1.0883);transform-origin:0 0"><span>11</span></div></div>
<div style="left:490px;top:396.0px;width:131px;height:26.0px;overflow:hidden"><div class="tx" style="left:5.50px;top:14.08px;font-size:11.6px;font-weight:normal;font-style:normal;color:#333333;-webkit-text-stroke:0.2px #333;transform:scaleX(0.9759);transform-origin:0 0"><span>Kadry i Płace</span></div></div>
<div style="left:621px;top:396.0px;width:168px;height:26.0px;overflow:hidden"><div class="tx" style="left:5.50px;top:14.08px;font-size:11.6px;font-weight:normal;font-style:normal;color:#333333;-webkit-text-stroke:0.2px #333;transform:scaleX(1.0260);transform-origin:0 0"><span>Akta osobowe</span></div></div>
<div style="left:789px;top:396.0px;width:83px;height:26.0px;overflow:hidden"><div class="tx" style="left:5.50px;top:14.08px;font-size:11.6px;font-weight:normal;font-style:normal;color:#333333;-webkit-text-stroke:0.2px #333;transform:scaleX(0.9263);transform-origin:0 0"><span>Część A</span></div></div>
<div style="left:872px;top:396.0px;width:171px;height:26.0px;overflow:hidden"><div class="tx" style="left:5.50px;top:14.08px;font-size:11.6px;font-weight:normal;font-style:normal;color:#333333;-webkit-text-stroke:0.2px #333;transform:scaleX(0.9263);transform-origin:0 0"><span>Część A</span></div></div>
<div style="left:1043px;top:396.0px;width:162px;height:26.0px;overflow:hidden"><div class="tx" style="left:5.50px;top:14.08px;font-size:11.6px;font-weight:normal;font-style:normal;color:#333333;-webkit-text-stroke:0.2px #333;transform:scaleX(1.0386);transform-origin:0 0"><span>A/0003</span></div></div>
<div style="left:1205px;top:396.0px;width:411px;height:26.0px;overflow:hidden"><div class="tx" style="left:5.50px;top:14.08px;font-size:11.6px;font-weight:normal;font-style:normal;color:#333333;-webkit-text-stroke:0.2px #333;transform:scaleX(1.0024);transform-origin:0 0"><span>Świadectwo pracy</span></div></div>
<div style="left:1616px;top:396.0px;width:141px;height:26.0px;overflow:hidden"><div class="tx" style="left:5.50px;top:14.08px;font-size:11.6px;font-weight:normal;font-style:normal;color:#333333;-webkit-text-stroke:0.2px #333;transform:scaleX(1.0033);transform-origin:0 0"><span>31.12.2012</span></div></div>
<div style="left:1757px;top:396.0px;width:149px;height:26.0px;overflow:hidden"><div class="tx" style="left:5.50px;top:14.08px;font-size:11.6px;font-weight:normal;font-style:normal;color:#333333;-webkit-text-stroke:0.2px #333;transform:scaleX(1.0024);transform-origin:0 0"><span>Świadectwo pracy</span></div></div>
<div style="left:395px;top:422.0px;width:95px;height:26.0px;overflow:hidden"><div class="tx" style="left:4.60px;top:14.08px;font-size:11.6px;font-weight:normal;font-style:normal;color:#333333;-webkit-text-stroke:0.2px #333;transform:scaleX(1.0883);transform-origin:0 0"><span>11</span></div></div>
<div style="left:490px;top:422.0px;width:131px;height:26.0px;overflow:hidden"><div class="tx" style="left:5.50px;top:14.08px;font-size:11.6px;font-weight:normal;font-style:normal;color:#333333;-webkit-text-stroke:0.2px #333;transform:scaleX(0.9759);transform-origin:0 0"><span>Kadry i Płace</span></div></div>
<div style="left:621px;top:422.0px;width:168px;height:26.0px;overflow:hidden"><div class="tx" style="left:5.50px;top:14.08px;font-size:11.6px;font-weight:normal;font-style:normal;color:#333333;-webkit-text-stroke:0.2px #333;transform:scaleX(1.0260);transform-origin:0 0"><span>Akta osobowe</span></div></div>
<div style="left:789px;top:422.0px;width:83px;height:26.0px;overflow:hidden"><div class="tx" style="left:5.50px;top:14.08px;font-size:11.6px;font-weight:normal;font-style:normal;color:#333333;-webkit-text-stroke:0.2px #333;transform:scaleX(0.9062);transform-origin:0 0"><span>Część B</span></div></div>
<div style="left:872px;top:422.0px;width:171px;height:26.0px;overflow:hidden"><div class="tx" style="left:5.50px;top:14.08px;font-size:11.6px;font-weight:normal;font-style:normal;color:#333333;-webkit-text-stroke:0.2px #333;transform:scaleX(0.9062);transform-origin:0 0"><span>Część B</span></div></div>
<div style="left:1043px;top:422.0px;width:162px;height:26.0px;overflow:hidden"><div class="tx" style="left:5.50px;top:14.08px;font-size:11.6px;font-weight:normal;font-style:normal;color:#333333;-webkit-text-stroke:0.2px #333;transform:scaleX(1.0226);transform-origin:0 0"><span>B/1Z/0004</span></div></div>
<div style="left:1205px;top:422.0px;width:411px;height:26.0px;overflow:hidden"><div class="tx" style="left:5.50px;top:14.08px;font-size:11.6px;font-weight:normal;font-style:normal;color:#333333;-webkit-text-stroke:0.2px #333;transform:scaleX(1.0026);transform-origin:0 0"><span>Zaświadczenie na prośbę pracownika</span></div></div>
<div style="left:1616px;top:422.0px;width:141px;height:26.0px;overflow:hidden"><div class="tx" style="left:5.50px;top:14.08px;font-size:11.6px;font-weight:normal;font-style:normal;color:#333333;-webkit-text-stroke:0.2px #333;transform:scaleX(1.0033);transform-origin:0 0"><span>31.05.2018</span></div></div>
<div style="left:1757px;top:422.0px;width:149px;height:26.0px;overflow:hidden"><div class="tx" style="left:5.50px;top:14.08px;font-size:11.6px;font-weight:normal;font-style:normal;color:#333333;-webkit-text-stroke:0.2px #333;transform:scaleX(1.0093);transform-origin:0 0"><span>Zaświadczenie o zatrudnieniu</span></div></div>
<div style="left:395px;top:448.0px;width:95px;height:26.0px;overflow:hidden"><div class="tx" style="left:4.60px;top:14.08px;font-size:11.6px;font-weight:normal;font-style:normal;color:#333333;-webkit-text-stroke:0.2px #333;transform:scaleX(1.0883);transform-origin:0 0"><span>11</span></div></div>
<div style="left:490px;top:448.0px;width:131px;height:26.0px;overflow:hidden"><div class="tx" style="left:5.50px;top:14.08px;font-size:11.6px;font-weight:normal;font-style:normal;color:#333333;-webkit-text-stroke:0.2px #333;transform:scaleX(0.9759);transform-origin:0 0"><span>Kadry i Płace</span></div></div>
<div style="left:621px;top:448.0px;width:168px;height:26.0px;overflow:hidden"><div class="tx" style="left:5.50px;top:14.08px;font-size:11.6px;font-weight:normal;font-style:normal;color:#333333;-webkit-text-stroke:0.2px #333;transform:scaleX(1.0260);transform-origin:0 0"><span>Akta osobowe</span></div></div>
<div style="left:789px;top:448.0px;width:83px;height:26.0px;overflow:hidden"><div class="tx" style="left:5.50px;top:14.08px;font-size:11.6px;font-weight:normal;font-style:normal;color:#333333;-webkit-text-stroke:0.2px #333;transform:scaleX(0.9062);transform-origin:0 0"><span>Część B</span></div></div>
<div style="left:872px;top:448.0px;width:171px;height:26.0px;overflow:hidden"><div class="tx" style="left:5.50px;top:14.08px;font-size:11.6px;font-weight:normal;font-style:normal;color:#333333;-webkit-text-stroke:0.2px #333;transform:scaleX(0.9062);transform-origin:0 0"><span>Część B</span></div></div>
<div style="left:1043px;top:448.0px;width:162px;height:26.0px;overflow:hidden"><div class="tx" style="left:5.50px;top:14.08px;font-size:11.6px;font-weight:normal;font-style:normal;color:#333333;-webkit-text-stroke:0.2px #333;transform:scaleX(1.0226);transform-origin:0 0"><span>B/1Z/0007</span></div></div>
<div style="left:1205px;top:448.0px;width:411px;height:26.0px;overflow:hidden"><div class="tx" style="left:5.50px;top:14.08px;font-size:11.6px;font-weight:normal;font-style:normal;color:#333333;-webkit-text-stroke:0.2px #333;transform:scaleX(0.9712);transform-origin:0 0"><span>IMIR.Florczyk</span></div></div>
<div style="left:1616px;top:448.0px;width:141px;height:26.0px;overflow:hidden"><div class="tx" style="left:5.50px;top:14.08px;font-size:11.6px;font-weight:normal;font-style:normal;color:#333333;-webkit-text-stroke:0.2px #333;transform:scaleX(1.0033);transform-origin:0 0"><span>31.12.2016</span></div></div>
<div style="left:1757px;top:448.0px;width:149px;height:26.0px;overflow:hidden"><div class="tx" style="left:5.50px;top:14.08px;font-size:11.6px;font-weight:normal;font-style:normal;color:#333333;-webkit-text-stroke:0.2px #333;transform:scaleX(0.9367);transform-origin:0 0"><span>ZUS IMIR</span></div></div>
<div style="left:395px;top:474.0px;width:95px;height:26.0px;overflow:hidden"><div class="tx" style="left:4.60px;top:14.08px;font-size:11.6px;font-weight:normal;font-style:normal;color:#333333;-webkit-text-stroke:0.2px #333;transform:scaleX(1.0883);transform-origin:0 0"><span>11</span></div></div>
<div style="left:490px;top:474.0px;width:131px;height:26.0px;overflow:hidden"><div class="tx" style="left:5.50px;top:14.08px;font-size:11.6px;font-weight:normal;font-style:normal;color:#333333;-webkit-text-stroke:0.2px #333;transform:scaleX(0.9759);transform-origin:0 0"><span>Kadry i Płace</span></div></div>
<div style="left:621px;top:474.0px;width:168px;height:26.0px;overflow:hidden"><div class="tx" style="left:5.50px;top:14.08px;font-size:11.6px;font-weight:normal;font-style:normal;color:#333333;-webkit-text-stroke:0.2px #333;transform:scaleX(1.0260);transform-origin:0 0"><span>Akta osobowe</span></div></div>
<div style="left:789px;top:474.0px;width:83px;height:26.0px;overflow:hidden"><div class="tx" style="left:5.50px;top:14.08px;font-size:11.6px;font-weight:normal;font-style:normal;color:#333333;-webkit-text-stroke:0.2px #333;transform:scaleX(0.9062);transform-origin:0 0"><span>Część B</span></div></div>
<div style="left:872px;top:474.0px;width:171px;height:26.0px;overflow:hidden"><div class="tx" style="left:5.50px;top:14.08px;font-size:11.6px;font-weight:normal;font-style:normal;color:#333333;-webkit-text-stroke:0.2px #333;transform:scaleX(0.9062);transform-origin:0 0"><span>Część B</span></div></div>
<div style="left:1043px;top:474.0px;width:162px;height:26.0px;overflow:hidden"><div class="tx" style="left:5.50px;top:14.08px;font-size:11.6px;font-weight:normal;font-style:normal;color:#333333;-webkit-text-stroke:0.2px #333;transform:scaleX(1.0226);transform-origin:0 0"><span>B/1Z/0007</span></div></div>
<div style="left:1205px;top:474.0px;width:411px;height:26.0px;overflow:hidden"><div class="tx" style="left:5.50px;top:14.08px;font-size:11.6px;font-weight:normal;font-style:normal;color:#333333;-webkit-text-stroke:0.2px #333;transform:scaleX(0.9712);transform-origin:0 0"><span>IMIR.Florczyk</span></div></div>
<div style="left:1616px;top:474.0px;width:141px;height:26.0px;overflow:hidden"><div class="tx" style="left:5.50px;top:14.08px;font-size:11.6px;font-weight:normal;font-style:normal;color:#333333;-webkit-text-stroke:0.2px #333;transform:scaleX(1.0033);transform-origin:0 0"><span>31.12.2017</span></div></div>
<div style="left:1757px;top:474.0px;width:149px;height:26.0px;overflow:hidden"><div class="tx" style="left:5.50px;top:14.08px;font-size:11.6px;font-weight:normal;font-style:normal;color:#333333;-webkit-text-stroke:0.2px #333;transform:scaleX(0.9367);transform-origin:0 0"><span>ZUS IMIR</span></div></div>
<div style="left:395px;top:500.0px;width:95px;height:26.0px;overflow:hidden"><div class="tx" style="left:4.60px;top:14.08px;font-size:11.6px;font-weight:normal;font-style:normal;color:#333333;-webkit-text-stroke:0.2px #333;transform:scaleX(1.0883);transform-origin:0 0"><span>11</span></div></div>
<div style="left:490px;top:500.0px;width:131px;height:26.0px;overflow:hidden"><div class="tx" style="left:5.50px;top:14.08px;font-size:11.6px;font-weight:normal;font-style:normal;color:#333333;-webkit-text-stroke:0.2px #333;transform:scaleX(0.9759);transform-origin:0 0"><span>Kadry i Płace</span></div></div>
<div style="left:621px;top:500.0px;width:168px;height:26.0px;overflow:hidden"><div class="tx" style="left:5.50px;top:14.08px;font-size:11.6px;font-weight:normal;font-style:normal;color:#333333;-webkit-text-stroke:0.2px #333;transform:scaleX(1.0214);transform-origin:0 0"><span>Dokumenty stosunku pracy</span></div></div>
<div style="left:789px;top:500.0px;width:83px;height:26.0px;overflow:hidden"><div class="tx" style="left:5.50px;top:14.08px;font-size:11.6px;font-weight:normal;font-style:normal;color:#333333;-webkit-text-stroke:0.2px #333;transform:scaleX(0.9551);transform-origin:0 0"><span>Sekcja 1</span></div></div>
<div style="left:1043px;top:500.0px;width:162px;height:26.0px;overflow:hidden"><div class="tx" style="left:5.50px;top:14.08px;font-size:11.6px;font-weight:normal;font-style:normal;color:#333333;-webkit-text-stroke:0.2px #333"><span>S/1C/0002</span></div></div>
<div style="left:1205px;top:500.0px;width:411px;height:26.0px;overflow:hidden"><div class="tx" style="left:5.50px;top:14.08px;font-size:11.6px;font-weight:normal;font-style:normal;color:#333333;-webkit-text-stroke:0.2px #333;transform:scaleX(0.9880);transform-origin:0 0"><span>PIT-11 Florczyk</span></div></div>
<div style="left:1616px;top:500.0px;width:141px;height:26.0px;overflow:hidden"><div class="tx" style="left:5.50px;top:14.08px;font-size:11.6px;font-weight:normal;font-style:normal;color:#333333;-webkit-text-stroke:0.2px #333;transform:scaleX(1.0033);transform-origin:0 0"><span>31.12.2016</span></div></div>
<div style="left:1757px;top:500.0px;width:149px;height:26.0px;overflow:hidden"><div class="tx" style="left:5.50px;top:14.08px;font-size:11.6px;font-weight:normal;font-style:normal;color:#333333;-webkit-text-stroke:0.2px #333;transform:scaleX(1.0059);transform-origin:0 0"><span>PIT-11</span></div></div>
<div style="left:395px;top:526.0px;width:95px;height:26.0px;overflow:hidden"><div class="tx" style="left:4.60px;top:14.08px;font-size:11.6px;font-weight:normal;font-style:normal;color:#333333;-webkit-text-stroke:0.2px #333;transform:scaleX(1.0883);transform-origin:0 0"><span>11</span></div></div>
<div style="left:490px;top:526.0px;width:131px;height:26.0px;overflow:hidden"><div class="tx" style="left:5.50px;top:14.08px;font-size:11.6px;font-weight:normal;font-style:normal;color:#333333;-webkit-text-stroke:0.2px #333;transform:scaleX(0.9759);transform-origin:0 0"><span>Kadry i Płace</span></div></div>
<div style="left:621px;top:526.0px;width:168px;height:26.0px;overflow:hidden"><div class="tx" style="left:5.50px;top:14.08px;font-size:11.6px;font-weight:normal;font-style:normal;color:#333333;-webkit-text-stroke:0.2px #333;transform:scaleX(1.0214);transform-origin:0 0"><span>Dokumenty stosunku pracy</span></div></div>
<div style="left:789px;top:526.0px;width:83px;height:26.0px;overflow:hidden"><div class="tx" style="left:5.50px;top:14.08px;font-size:11.6px;font-weight:normal;font-style:normal;color:#333333;-webkit-text-stroke:0.2px #333;transform:scaleX(0.9551);transform-origin:0 0"><span>Sekcja 1</span></div></div>
<div style="left:1043px;top:526.0px;width:162px;height:26.0px;overflow:hidden"><div class="tx" style="left:5.50px;top:14.08px;font-size:11.6px;font-weight:normal;font-style:normal;color:#333333;-webkit-text-stroke:0.2px #333"><span>S/1C/0003</span></div></div>
<div style="left:1205px;top:526.0px;width:411px;height:26.0px;overflow:hidden"><div class="tx" style="left:5.50px;top:14.08px;font-size:11.6px;font-weight:normal;font-style:normal;color:#333333;-webkit-text-stroke:0.2px #333;transform:scaleX(0.9880);transform-origin:0 0"><span>PIT-11 Florczyk</span></div></div>
<div style="left:1616px;top:526.0px;width:141px;height:26.0px;overflow:hidden"><div class="tx" style="left:5.50px;top:14.08px;font-size:11.6px;font-weight:normal;font-style:normal;color:#333333;-webkit-text-stroke:0.2px #333;transform:scaleX(1.0033);transform-origin:0 0"><span>28.02.2018</span></div></div>
<div style="left:1757px;top:526.0px;width:149px;height:26.0px;overflow:hidden"><div class="tx" style="left:5.50px;top:14.08px;font-size:11.6px;font-weight:normal;font-style:normal;color:#333333;-webkit-text-stroke:0.2px #333;transform:scaleX(1.0059);transform-origin:0 0"><span>PIT-11</span></div></div>
<div style="left:395px;top:552.0px;width:95px;height:26.0px;overflow:hidden"><div class="tx" style="left:4.60px;top:14.08px;font-size:11.6px;font-weight:normal;font-style:normal;color:#333333;-webkit-text-stroke:0.2px #333;transform:scaleX(1.0883);transform-origin:0 0"><span>11</span></div></div>
<div style="left:490px;top:552.0px;width:131px;height:26.0px;overflow:hidden"><div class="tx" style="left:5.50px;top:14.08px;font-size:11.6px;font-weight:normal;font-style:normal;color:#333333;-webkit-text-stroke:0.2px #333;transform:scaleX(0.9759);transform-origin:0 0"><span>Kadry i Płace</span></div></div>
<div style="left:621px;top:552.0px;width:168px;height:26.0px;overflow:hidden"><div class="tx" style="left:5.50px;top:14.08px;font-size:11.6px;font-weight:normal;font-style:normal;color:#333333;-webkit-text-stroke:0.2px #333;transform:scaleX(1.0260);transform-origin:0 0"><span>Akta osobowe</span></div></div>
<div style="left:789px;top:552.0px;width:83px;height:26.0px;overflow:hidden"><div class="tx" style="left:5.50px;top:14.08px;font-size:11.6px;font-weight:normal;font-style:normal;color:#333333;-webkit-text-stroke:0.2px #333;transform:scaleX(0.9062);transform-origin:0 0"><span>Część B</span></div></div>
<div style="left:872px;top:552.0px;width:171px;height:26.0px;overflow:hidden"><div class="tx" style="left:5.50px;top:14.08px;font-size:11.6px;font-weight:normal;font-style:normal;color:#333333;-webkit-text-stroke:0.2px #333;transform:scaleX(0.9062);transform-origin:0 0"><span>Część B</span></div></div>
<div style="left:1043px;top:552.0px;width:162px;height:26.0px;overflow:hidden"><div class="tx" style="left:5.50px;top:14.08px;font-size:11.6px;font-weight:normal;font-style:normal;color:#333333;-webkit-text-stroke:0.2px #333;transform:scaleX(1.0226);transform-origin:0 0"><span>B/1Z/0012</span></div></div>
<div style="left:1205px;top:552.0px;width:411px;height:26.0px;overflow:hidden"><div class="tx" style="left:5.50px;top:14.08px;font-size:11.6px;font-weight:normal;font-style:normal;color:#333333;-webkit-text-stroke:0.2px #333"><span>Szkolenie wstępne</span></div></div>
<div style="left:1616px;top:552.0px;width:141px;height:26.0px;overflow:hidden"><div class="tx" style="left:5.50px;top:14.08px;font-size:11.6px;font-weight:normal;font-style:normal;color:#333333;-webkit-text-stroke:0.2px #333;transform:scaleX(1.0033);transform-origin:0 0"><span>02.10.2015</span></div></div>
<div style="left:1757px;top:552.0px;width:149px;height:26.0px;overflow:hidden"><div class="tx" style="left:5.50px;top:14.08px;font-size:11.6px;font-weight:normal;font-style:normal;color:#333333;-webkit-text-stroke:0.2px #333;transform:scaleX(0.9620);transform-origin:0 0"><span>Szkolenie BHP</span></div></div>
<div style="left:395px;top:578.0px;width:95px;height:26.0px;overflow:hidden"><div class="tx" style="left:4.60px;top:14.08px;font-size:11.6px;font-weight:normal;font-style:normal;color:#333333;-webkit-text-stroke:0.2px #333;transform:scaleX(1.0883);transform-origin:0 0"><span>11</span></div></div>
<div style="left:490px;top:578.0px;width:131px;height:26.0px;overflow:hidden"><div class="tx" style="left:5.50px;top:14.08px;font-size:11.6px;font-weight:normal;font-style:normal;color:#333333;-webkit-text-stroke:0.2px #333;transform:scaleX(0.9759);transform-origin:0 0"><span>Kadry i Płace</span></div></div>
<div style="left:621px;top:578.0px;width:168px;height:26.0px;overflow:hidden"><div class="tx" style="left:5.50px;top:14.08px;font-size:11.6px;font-weight:normal;font-style:normal;color:#333333;-webkit-text-stroke:0.2px #333;transform:scaleX(1.0260);transform-origin:0 0"><span>Akta osobowe</span></div></div>
<div style="left:789px;top:578.0px;width:83px;height:26.0px;overflow:hidden"><div class="tx" style="left:5.50px;top:14.08px;font-size:11.6px;font-weight:normal;font-style:normal;color:#333333;-webkit-text-stroke:0.2px #333;transform:scaleX(0.9062);transform-origin:0 0"><span>Część B</span></div></div>
<div style="left:872px;top:578.0px;width:171px;height:26.0px;overflow:hidden"><div class="tx" style="left:5.50px;top:14.08px;font-size:11.6px;font-weight:normal;font-style:normal;color:#333333;-webkit-text-stroke:0.2px #333;transform:scaleX(0.9062);transform-origin:0 0"><span>Część B</span></div></div>
<div style="left:1043px;top:578.0px;width:162px;height:26.0px;overflow:hidden"><div class="tx" style="left:5.50px;top:14.08px;font-size:11.6px;font-weight:normal;font-style:normal;color:#333333;-webkit-text-stroke:0.2px #333;transform:scaleX(1.0393);transform-origin:0 0"><span>B/1Z/0011</span></div></div>
<div style="left:1205px;top:578.0px;width:411px;height:26.0px;overflow:hidden"><div class="tx" style="left:5.50px;top:14.08px;font-size:11.6px;font-weight:normal;font-style:normal;color:#333333;-webkit-text-stroke:0.2px #333"><span>Szkolenie okresowe</span></div></div>
<div style="left:1616px;top:578.0px;width:141px;height:26.0px;overflow:hidden"><div class="tx" style="left:5.50px;top:14.08px;font-size:11.6px;font-weight:normal;font-style:normal;color:#333333;-webkit-text-stroke:0.2px #333;transform:scaleX(1.0033);transform-origin:0 0"><span>01.10.2017</span></div></div>
<div style="left:1757px;top:578.0px;width:149px;height:26.0px;overflow:hidden"><div class="tx" style="left:5.50px;top:14.08px;font-size:11.6px;font-weight:normal;font-style:normal;color:#333333;-webkit-text-stroke:0.2px #333;transform:scaleX(0.9620);transform-origin:0 0"><span>Szkolenie BHP</span></div></div>
<div style="left:395px;top:604.0px;width:95px;height:26.0px;overflow:hidden"><div class="tx" style="left:4.60px;top:14.08px;font-size:11.6px;font-weight:normal;font-style:normal;color:#333333;-webkit-text-stroke:0.2px #333;transform:scaleX(1.0883);transform-origin:0 0"><span>11</span></div></div>
<div style="left:490px;top:604.0px;width:131px;height:26.0px;overflow:hidden"><div class="tx" style="left:5.50px;top:14.08px;font-size:11.6px;font-weight:normal;font-style:normal;color:#333333;-webkit-text-stroke:0.2px #333;transform:scaleX(0.9759);transform-origin:0 0"><span>Kadry i Płace</span></div></div>
<div style="left:621px;top:604.0px;width:168px;height:26.0px;overflow:hidden"><div class="tx" style="left:5.50px;top:14.08px;font-size:11.6px;font-weight:normal;font-style:normal;color:#333333;-webkit-text-stroke:0.2px #333;transform:scaleX(1.0260);transform-origin:0 0"><span>Akta osobowe</span></div></div>
<div style="left:789px;top:604.0px;width:83px;height:26.0px;overflow:hidden"><div class="tx" style="left:5.50px;top:14.08px;font-size:11.6px;font-weight:normal;font-style:normal;color:#333333;-webkit-text-stroke:0.2px #333;transform:scaleX(0.9062);transform-origin:0 0"><span>Część B</span></div></div>
<div style="left:872px;top:604.0px;width:171px;height:26.0px;overflow:hidden"><div class="tx" style="left:5.50px;top:14.08px;font-size:11.6px;font-weight:normal;font-style:normal;color:#333333;-webkit-text-stroke:0.2px #333;transform:scaleX(0.9062);transform-origin:0 0"><span>Część B</span></div></div>
<div style="left:1043px;top:604.0px;width:162px;height:26.0px;overflow:hidden"><div class="tx" style="left:5.50px;top:14.08px;font-size:11.6px;font-weight:normal;font-style:normal;color:#333333;-webkit-text-stroke:0.2px #333;transform:scaleX(1.0226);transform-origin:0 0"><span>B/1Z/0012</span></div></div>
<div style="left:1205px;top:604.0px;width:411px;height:26.0px;overflow:hidden"><div class="tx" style="left:5.50px;top:14.08px;font-size:11.6px;font-weight:normal;font-style:normal;color:#333333;-webkit-text-stroke:0.2px #333;transform:scaleX(0.9901);transform-origin:0 0"><span>Sygnatura 258/GFE/721-852/PL</span></div></div>
<div style="left:1616px;top:604.0px;width:141px;height:26.0px;overflow:hidden"><div class="tx" style="left:5.50px;top:14.08px;font-size:11.6px;font-weight:normal;font-style:normal;color:#333333;-webkit-text-stroke:0.2px #333;transform:scaleX(1.0033);transform-origin:0 0"><span>15.01.2018</span></div></div>
<div style="left:1757px;top:604.0px;width:149px;height:26.0px;overflow:hidden"><div class="tx" style="left:5.50px;top:14.08px;font-size:11.6px;font-weight:normal;font-style:normal;color:#333333;-webkit-text-stroke:0.2px #333;transform:scaleX(1.0129);transform-origin:0 0"><span>Potrącenie komornicze</span></div></div>
<div style="left:395px;top:630.0px;width:95px;height:26.0px;overflow:hidden"><div class="tx" style="left:4.60px;top:14.08px;font-size:11.6px;font-weight:normal;font-style:normal;color:#333333;-webkit-text-stroke:0.2px #333;transform:scaleX(1.0157);transform-origin:0 0"><span>6</span></div></div>
<div style="left:490px;top:630.0px;width:131px;height:26.0px;overflow:hidden"><div class="tx" style="left:5.50px;top:14.08px;font-size:11.6px;font-weight:normal;font-style:normal;color:#333333;-webkit-text-stroke:0.2px #333;transform:scaleX(1.0165);transform-origin:0 0"><span>Zespół programistyczny</span></div></div>
<div style="left:621px;top:630.0px;width:168px;height:26.0px;overflow:hidden"><div class="tx" style="left:5.50px;top:14.08px;font-size:11.6px;font-weight:normal;font-style:normal;color:#333333;-webkit-text-stroke:0.2px #333;transform:scaleX(1.0260);transform-origin:0 0"><span>Akta osobowe</span></div></div>
<div style="left:789px;top:630.0px;width:83px;height:26.0px;overflow:hidden"><div class="tx" style="left:5.50px;top:14.08px;font-size:11.6px;font-weight:normal;font-style:normal;color:#333333;-webkit-text-stroke:0.2px #333;transform:scaleX(0.9062);transform-origin:0 0"><span>Część B</span></div></div>
<div style="left:872px;top:630.0px;width:171px;height:26.0px;overflow:hidden"><div class="tx" style="left:5.50px;top:14.08px;font-size:11.6px;font-weight:normal;font-style:normal;color:#333333;-webkit-text-stroke:0.2px #333;transform:scaleX(0.9062);transform-origin:0 0"><span>Część B</span></div></div>
<div style="left:1043px;top:630.0px;width:162px;height:26.0px;overflow:hidden"><div class="tx" style="left:5.50px;top:14.08px;font-size:11.6px;font-weight:normal;font-style:normal;color:#333333;-webkit-text-stroke:0.2px #333;transform:scaleX(1.0147);transform-origin:0 0"><span>B/1B/0001</span></div></div>
<div style="left:1205px;top:630.0px;width:411px;height:26.0px;overflow:hidden"><div class="tx" style="left:5.50px;top:14.08px;font-size:11.6px;font-weight:normal;font-style:normal;color:#333333;-webkit-text-stroke:0.2px #333;transform:scaleX(1.0108);transform-origin:0 0"><span>Zmiana danych osobowych</span></div></div>
<div style="left:1616px;top:630.0px;width:141px;height:26.0px;overflow:hidden"><div class="tx" style="left:5.50px;top:14.08px;font-size:11.6px;font-weight:normal;font-style:normal;color:#333333;-webkit-text-stroke:0.2px #333;transform:scaleX(1.0033);transform-origin:0 0"><span>03.09.2024</span></div></div>
<div style="left:1757px;top:630.0px;width:149px;height:26.0px;overflow:hidden"><div class="tx" style="left:5.50px;top:14.08px;font-size:11.6px;font-weight:normal;font-style:normal;color:#333333;-webkit-text-stroke:0.2px #333;transform:scaleX(1.0316);transform-origin:0 0"><span>Inne dokumenty pracownika</span></div></div>
<div style="left:395px;top:656.0px;width:95px;height:26.0px;overflow:hidden"><div class="tx" style="left:4.60px;top:14.08px;font-size:11.6px;font-weight:normal;font-style:normal;color:#333333;-webkit-text-stroke:0.2px #333;transform:scaleX(1.0157);transform-origin:0 0"><span>6</span></div></div>
<div style="left:490px;top:656.0px;width:131px;height:26.0px;overflow:hidden"><div class="tx" style="left:5.50px;top:14.08px;font-size:11.6px;font-weight:normal;font-style:normal;color:#333333;-webkit-text-stroke:0.2px #333;transform:scaleX(1.0165);transform-origin:0 0"><span>Zespół programistyczny</span></div></div>
<div style="left:621px;top:656.0px;width:168px;height:26.0px;overflow:hidden"><div class="tx" style="left:5.50px;top:14.08px;font-size:11.6px;font-weight:normal;font-style:normal;color:#333333;-webkit-text-stroke:0.2px #333;transform:scaleX(1.0214);transform-origin:0 0"><span>Dokumenty stosunku pracy</span></div></div>
<div style="left:789px;top:656.0px;width:83px;height:26.0px;overflow:hidden"><div class="tx" style="left:5.50px;top:14.08px;font-size:11.6px;font-weight:normal;font-style:normal;color:#333333;-webkit-text-stroke:0.2px #333;transform:scaleX(0.9551);transform-origin:0 0"><span>Sekcja 1</span></div></div>
<div style="left:1043px;top:656.0px;width:162px;height:26.0px;overflow:hidden"><div class="tx" style="left:5.50px;top:14.08px;font-size:11.6px;font-weight:normal;font-style:normal;color:#333333;-webkit-text-stroke:0.2px #333;transform:scaleX(1.0027);transform-origin:0 0"><span>S/1B/0001</span></div></div>
<div style="left:1205px;top:656.0px;width:411px;height:26.0px;overflow:hidden"><div class="tx" style="left:5.50px;top:14.08px;font-size:11.6px;font-weight:normal;font-style:normal;color:#333333;-webkit-text-stroke:0.2px #333"><span>Zmiana danych</span></div></div>
<div style="left:1616px;top:656.0px;width:141px;height:26.0px;overflow:hidden"><div class="tx" style="left:5.50px;top:14.08px;font-size:11.6px;font-weight:normal;font-style:normal;color:#333333;-webkit-text-stroke:0.2px #333;transform:scaleX(1.0033);transform-origin:0 0"><span>04.09.2024</span></div></div>
<div style="left:1757px;top:656.0px;width:149px;height:26.0px;overflow:hidden"><div class="tx" style="left:5.50px;top:14.08px;font-size:11.6px;font-weight:normal;font-style:normal;color:#333333;-webkit-text-stroke:0.2px #333;transform:scaleX(1.0316);transform-origin:0 0"><span>Inne dokumenty pracownika</span></div></div>
<div style="left:395px;top:682.0px;width:95px;height:26.0px;overflow:hidden"><div class="tx" style="left:4.60px;top:14.08px;font-size:11.6px;font-weight:normal;font-style:normal;color:#333333;-webkit-text-stroke:0.2px #333;transform:scaleX(1.0157);transform-origin:0 0"><span>5</span></div></div>
<div style="left:490px;top:682.0px;width:131px;height:26.0px;overflow:hidden"><div class="tx" style="left:5.50px;top:14.08px;font-size:11.6px;font-weight:normal;font-style:normal;color:#333333;-webkit-text-stroke:0.2px #333;transform:scaleX(1.0165);transform-origin:0 0"><span>Zespół programistyczny</span></div></div>
<div style="left:621px;top:682.0px;width:168px;height:26.0px;overflow:hidden"><div class="tx" style="left:5.50px;top:14.08px;font-size:11.6px;font-weight:normal;font-style:normal;color:#333333;-webkit-text-stroke:0.2px #333;transform:scaleX(1.0260);transform-origin:0 0"><span>Akta osobowe</span></div></div>
<div style="left:789px;top:682.0px;width:83px;height:26.0px;overflow:hidden"><div class="tx" style="left:5.50px;top:14.08px;font-size:11.6px;font-weight:normal;font-style:normal;color:#333333;-webkit-text-stroke:0.2px #333;transform:scaleX(0.9263);transform-origin:0 0"><span>Część A</span></div></div>
<div style="left:872px;top:682.0px;width:171px;height:26.0px;overflow:hidden"><div class="tx" style="left:5.50px;top:14.08px;font-size:11.6px;font-weight:normal;font-style:normal;color:#333333;-webkit-text-stroke:0.2px #333;transform:scaleX(0.9263);transform-origin:0 0"><span>Część A</span></div></div>
<div style="left:1043px;top:682.0px;width:162px;height:26.0px;overflow:hidden"><div class="tx" style="left:5.50px;top:14.08px;font-size:11.6px;font-weight:normal;font-style:normal;color:#333333;-webkit-text-stroke:0.2px #333;transform:scaleX(1.0386);transform-origin:0 0"><span>A/0001</span></div></div>
<div style="left:1205px;top:682.0px;width:411px;height:26.0px;overflow:hidden"><div class="tx" style="left:5.50px;top:14.08px;font-size:11.6px;font-weight:normal;font-style:normal;color:#333333;-webkit-text-stroke:0.2px #333;transform:scaleX(1.0105);transform-origin:0 0"><span>Kwestionariusz osobowy</span></div></div>
<div style="left:1616px;top:682.0px;width:141px;height:26.0px;overflow:hidden"><div class="tx" style="left:5.50px;top:14.08px;font-size:11.6px;font-weight:normal;font-style:normal;color:#333333;-webkit-text-stroke:0.2px #333;transform:scaleX(1.0033);transform-origin:0 0"><span>16.01.2025</span></div></div>
<div style="left:1757px;top:682.0px;width:149px;height:26.0px;overflow:hidden"><div class="tx" style="left:5.50px;top:14.08px;font-size:11.6px;font-weight:normal;font-style:normal;color:#333333;-webkit-text-stroke:0.2px #333;transform:scaleX(1.0316);transform-origin:0 0"><span>Inne dokumenty pracownika</span></div></div>
<div style="left:395px;top:708.0px;width:95px;height:26.0px;overflow:hidden"><div class="tx" style="left:4.60px;top:14.08px;font-size:11.6px;font-weight:normal;font-style:normal;color:#333333;-webkit-text-stroke:0.2px #333;transform:scaleX(1.0157);transform-origin:0 0"><span>5</span></div></div>
<div style="left:490px;top:708.0px;width:131px;height:26.0px;overflow:hidden"><div class="tx" style="left:5.50px;top:14.08px;font-size:11.6px;font-weight:normal;font-style:normal;color:#333333;-webkit-text-stroke:0.2px #333;transform:scaleX(1.0165);transform-origin:0 0"><span>Zespół programistyczny</span></div></div>
<div style="left:621px;top:708.0px;width:168px;height:26.0px;overflow:hidden"><div class="tx" style="left:5.50px;top:14.08px;font-size:11.6px;font-weight:normal;font-style:normal;color:#333333;-webkit-text-stroke:0.2px #333;transform:scaleX(1.0260);transform-origin:0 0"><span>Akta osobowe</span></div></div>
<div style="left:789px;top:708.0px;width:83px;height:26.0px;overflow:hidden"><div class="tx" style="left:5.50px;top:14.08px;font-size:11.6px;font-weight:normal;font-style:normal;color:#333333;-webkit-text-stroke:0.2px #333;transform:scaleX(0.9062);transform-origin:0 0"><span>Część B</span></div></div>
<div style="left:872px;top:708.0px;width:171px;height:26.0px;overflow:hidden"><div class="tx" style="left:5.50px;top:14.08px;font-size:11.6px;font-weight:normal;font-style:normal;color:#333333;-webkit-text-stroke:0.2px #333;transform:scaleX(0.9062);transform-origin:0 0"><span>Część B</span></div></div>
<div style="left:1043px;top:708.0px;width:162px;height:26.0px;overflow:hidden"><div class="tx" style="left:5.50px;top:14.08px;font-size:11.6px;font-weight:normal;font-style:normal;color:#333333;-webkit-text-stroke:0.2px #333;transform:scaleX(1.0308);transform-origin:0 0"><span>B/1A/0001</span></div></div>
<div style="left:1205px;top:708.0px;width:411px;height:26.0px;overflow:hidden"><div class="tx" style="left:5.50px;top:14.08px;font-size:11.6px;font-weight:normal;font-style:normal;color:#333333;-webkit-text-stroke:0.2px #333"><span>Badanie nr 1</span></div></div>
<div style="left:1616px;top:708.0px;width:141px;height:26.0px;overflow:hidden"><div class="tx" style="left:5.50px;top:14.08px;font-size:11.6px;font-weight:normal;font-style:normal;color:#333333;-webkit-text-stroke:0.2px #333;transform:scaleX(1.0033);transform-origin:0 0"><span>16.01.2025</span></div></div>
<div style="left:1757px;top:708.0px;width:149px;height:26.0px;overflow:hidden"><div class="tx" style="left:5.50px;top:14.08px;font-size:11.6px;font-weight:normal;font-style:normal;color:#333333;-webkit-text-stroke:0.2px #333;transform:scaleX(0.9900);transform-origin:0 0"><span>Badanie lekarskie</span></div></div>
<div style="left:395px;top:734.0px;width:95px;height:26.0px;overflow:hidden"><div class="tx" style="left:4.60px;top:14.08px;font-size:11.6px;font-weight:normal;font-style:normal;color:#333333;-webkit-text-stroke:0.2px #333;transform:scaleX(1.0883);transform-origin:0 0"><span>11</span></div></div>
<div style="left:490px;top:734.0px;width:131px;height:26.0px;overflow:hidden"><div class="tx" style="left:5.50px;top:14.08px;font-size:11.6px;font-weight:normal;font-style:normal;color:#333333;-webkit-text-stroke:0.2px #333;transform:scaleX(0.9759);transform-origin:0 0"><span>Kadry i Płace</span></div></div>
<div style="left:621px;top:734.0px;width:168px;height:26.0px;overflow:hidden"><div class="tx" style="left:5.50px;top:14.08px;font-size:11.6px;font-weight:normal;font-style:normal;color:#333333;-webkit-text-stroke:0.2px #333;transform:scaleX(1.0214);transform-origin:0 0"><span>Dokumenty stosunku pracy</span></div></div>
<div style="left:789px;top:734.0px;width:83px;height:26.0px;overflow:hidden"><div class="tx" style="left:5.50px;top:14.08px;font-size:11.6px;font-weight:normal;font-style:normal;color:#333333;-webkit-text-stroke:0.2px #333;transform:scaleX(0.9551);transform-origin:0 0"><span>Sekcja 1</span></div></div>
<div style="left:1043px;top:734.0px;width:162px;height:26.0px;overflow:hidden"><div class="tx" style="left:5.50px;top:14.08px;font-size:11.6px;font-weight:normal;font-style:normal;color:#333333;-webkit-text-stroke:0.2px #333"><span>S/1C/0004</span></div></div>
<div style="left:1205px;top:734.0px;width:411px;height:26.0px;overflow:hidden"><div class="tx" style="left:5.50px;top:14.08px;font-size:11.6px;font-weight:normal;font-style:normal;color:#333333;-webkit-text-stroke:0.2px #333;transform:scaleX(0.9876);transform-origin:0 0"><span>Badanie 1</span></div></div>
<div style="left:1616px;top:734.0px;width:141px;height:26.0px;overflow:hidden"><div class="tx" style="left:5.50px;top:14.08px;font-size:11.6px;font-weight:normal;font-style:normal;color:#333333;-webkit-text-stroke:0.2px #333;transform:scaleX(1.0033);transform-origin:0 0"><span>16.01.2025</span></div></div>
<div style="left:1757px;top:734.0px;width:149px;height:26.0px;overflow:hidden"><div class="tx" style="left:5.50px;top:14.08px;font-size:11.6px;font-weight:normal;font-style:normal;color:#333333;-webkit-text-stroke:0.2px #333;transform:scaleX(0.9900);transform-origin:0 0"><span>Badanie lekarskie</span></div></div>
<div style="left:395px;top:760.0px;width:95px;height:26.0px;overflow:hidden"><div class="tx" style="left:4.60px;top:14.08px;font-size:11.6px;font-weight:normal;font-style:normal;color:#333333;-webkit-text-stroke:0.2px #333;transform:scaleX(1.0883);transform-origin:0 0"><span>11</span></div></div>
<div style="left:490px;top:760.0px;width:131px;height:26.0px;overflow:hidden"><div class="tx" style="left:5.50px;top:14.08px;font-size:11.6px;font-weight:normal;font-style:normal;color:#333333;-webkit-text-stroke:0.2px #333;transform:scaleX(0.9759);transform-origin:0 0"><span>Kadry i Płace</span></div></div>
<div style="left:621px;top:760.0px;width:168px;height:26.0px;overflow:hidden"><div class="tx" style="left:5.50px;top:14.08px;font-size:11.6px;font-weight:normal;font-style:normal;color:#333333;-webkit-text-stroke:0.2px #333;transform:scaleX(1.0214);transform-origin:0 0"><span>Dokumenty stosunku pracy</span></div></div>
<div style="left:789px;top:760.0px;width:83px;height:26.0px;overflow:hidden"><div class="tx" style="left:5.50px;top:14.08px;font-size:11.6px;font-weight:normal;font-style:normal;color:#333333;-webkit-text-stroke:0.2px #333;transform:scaleX(0.9551);transform-origin:0 0"><span>Sekcja 1</span></div></div>
<div style="left:1043px;top:760.0px;width:162px;height:26.0px;overflow:hidden"><div class="tx" style="left:5.50px;top:14.08px;font-size:11.6px;font-weight:normal;font-style:normal;color:#333333;-webkit-text-stroke:0.2px #333"><span>S/1C/0005</span></div></div>
<div style="left:1205px;top:760.0px;width:411px;height:26.0px;overflow:hidden"><div class="tx" style="left:5.50px;top:14.08px;font-size:11.6px;font-weight:normal;font-style:normal;color:#333333;-webkit-text-stroke:0.2px #333;transform:scaleX(1.0021);transform-origin:0 0"><span>Zaświadczenie o urodzeniu dziecka</span></div></div>
<div style="left:1616px;top:760.0px;width:141px;height:26.0px;overflow:hidden"><div class="tx" style="left:5.50px;top:14.08px;font-size:11.6px;font-weight:normal;font-style:normal;color:#333333;-webkit-text-stroke:0.2px #333;transform:scaleX(1.0033);transform-origin:0 0"><span>16.01.2025</span></div></div>
<div style="left:1757px;top:760.0px;width:149px;height:26.0px;overflow:hidden"><div class="tx" style="left:5.50px;top:14.08px;font-size:11.6px;font-weight:normal;font-style:normal;color:#333333;-webkit-text-stroke:0.2px #333;transform:scaleX(1.0316);transform-origin:0 0"><span>Inne dokumenty pracownika</span></div></div>
<div style="left:395px;top:786.0px;width:95px;height:26.0px;overflow:hidden"><div class="tx" style="left:4.60px;top:14.08px;font-size:11.6px;font-weight:normal;font-style:normal;color:#333333;-webkit-text-stroke:0.2px #333;transform:scaleX(1.0883);transform-origin:0 0"><span>11</span></div></div>
<div style="left:490px;top:786.0px;width:131px;height:26.0px;overflow:hidden"><div class="tx" style="left:5.50px;top:14.08px;font-size:11.6px;font-weight:normal;font-style:normal;color:#333333;-webkit-text-stroke:0.2px #333;transform:scaleX(0.9759);transform-origin:0 0"><span>Kadry i Płace</span></div></div>
<div style="left:621px;top:786.0px;width:168px;height:26.0px;overflow:hidden"><div class="tx" style="left:5.50px;top:14.08px;font-size:11.6px;font-weight:normal;font-style:normal;color:#333333;-webkit-text-stroke:0.2px #333;transform:scaleX(1.0260);transform-origin:0 0"><span>Akta osobowe</span></div></div>
<div style="left:789px;top:786.0px;width:83px;height:26.0px;overflow:hidden"><div class="tx" style="left:5.50px;top:14.08px;font-size:11.6px;font-weight:normal;font-style:normal;color:#333333;-webkit-text-stroke:0.2px #333;transform:scaleX(0.9263);transform-origin:0 0"><span>Część A</span></div></div>
<div style="left:872px;top:786.0px;width:171px;height:26.0px;overflow:hidden"><div class="tx" style="left:5.50px;top:14.08px;font-size:11.6px;font-weight:normal;font-style:normal;color:#333333;-webkit-text-stroke:0.2px #333;transform:scaleX(0.9263);transform-origin:0 0"><span>Część A</span></div></div>
<div style="left:1043px;top:786.0px;width:162px;height:26.0px;overflow:hidden"><div class="tx" style="left:5.50px;top:14.08px;font-size:11.6px;font-weight:normal;font-style:normal;color:#333333;-webkit-text-stroke:0.2px #333;transform:scaleX(1.0386);transform-origin:0 0"><span>A/0006</span></div></div>
<div style="left:1205px;top:786.0px;width:411px;height:26.0px;overflow:hidden"><div class="tx" style="left:5.50px;top:14.08px;font-size:11.6px;font-weight:normal;font-style:normal;color:#333333;-webkit-text-stroke:0.2px #333;transform:scaleX(0.9679);transform-origin:0 0"><span>TECZKA_51244528_A_0006 A6_Florczyk Olga Świadectwo pracy 1</span></div></div>
<div style="left:1616px;top:786.0px;width:141px;height:26.0px;overflow:hidden"><div class="tx" style="left:5.50px;top:14.08px;font-size:11.6px;font-weight:normal;font-style:normal;color:#333333;-webkit-text-stroke:0.2px #333;transform:scaleX(1.0033);transform-origin:0 0"><span>01.04.2025</span></div></div>
<div style="left:1757px;top:786.0px;width:149px;height:26.0px;overflow:hidden"><div class="tx" style="left:5.50px;top:14.08px;font-size:11.6px;font-weight:normal;font-style:normal;color:#333333;-webkit-text-stroke:0.2px #333;transform:scaleX(1.0365);transform-origin:0 0"><span>Import dokumentacji pracowniczej</span></div></div>
<div style="left:395px;top:812.0px;width:95px;height:26.0px;overflow:hidden"><div class="tx" style="left:4.60px;top:14.08px;font-size:11.6px;font-weight:normal;font-style:normal;color:#333333;-webkit-text-stroke:0.2px #333;transform:scaleX(1.0883);transform-origin:0 0"><span>11</span></div></div>
<div style="left:490px;top:812.0px;width:131px;height:26.0px;overflow:hidden"><div class="tx" style="left:5.50px;top:14.08px;font-size:11.6px;font-weight:normal;font-style:normal;color:#333333;-webkit-text-stroke:0.2px #333;transform:scaleX(0.9759);transform-origin:0 0"><span>Kadry i Płace</span></div></div>
<div style="left:621px;top:812.0px;width:168px;height:26.0px;overflow:hidden"><div class="tx" style="left:5.50px;top:14.08px;font-size:11.6px;font-weight:normal;font-style:normal;color:#333333;-webkit-text-stroke:0.2px #333;transform:scaleX(1.0260);transform-origin:0 0"><span>Akta osobowe</span></div></div>
<div style="left:789px;top:812.0px;width:83px;height:26.0px;overflow:hidden"><div class="tx" style="left:5.50px;top:14.08px;font-size:11.6px;font-weight:normal;font-style:normal;color:#333333;-webkit-text-stroke:0.2px #333;transform:scaleX(0.9047);transform-origin:0 0"><span>Część C</span></div></div>
<div style="left:872px;top:812.0px;width:171px;height:26.0px;overflow:hidden"><div class="tx" style="left:5.50px;top:14.08px;font-size:11.6px;font-weight:normal;font-style:normal;color:#333333;-webkit-text-stroke:0.2px #333;transform:scaleX(0.9047);transform-origin:0 0"><span>Część C</span></div></div>
<div style="left:1043px;top:812.0px;width:162px;height:26.0px;overflow:hidden"><div class="tx" style="left:5.50px;top:14.08px;font-size:11.6px;font-weight:normal;font-style:normal;color:#333333;-webkit-text-stroke:0.2px #333;transform:scaleX(1.0200);transform-origin:0 0"><span>C/9Z/0001</span></div></div>
<div style="left:1205px;top:812.0px;width:411px;height:26.0px;overflow:hidden"><div class="tx" style="left:5.50px;top:14.08px;font-size:11.6px;font-weight:normal;font-style:normal;color:#333333;-webkit-text-stroke:0.2px #333;transform:scaleX(0.9743);transform-origin:0 0"><span>TECZKA_51244528_C_0002 Florczyk Olga Zaświadczenie o urodzeniu dziecka</span></div></div>
<div style="left:1616px;top:812.0px;width:141px;height:26.0px;overflow:hidden"><div class="tx" style="left:5.50px;top:14.08px;font-size:11.6px;font-weight:normal;font-style:normal;color:#333333;-webkit-text-stroke:0.2px #333;transform:scaleX(1.0033);transform-origin:0 0"><span>01.04.2025</span></div></div>
<div style="left:1757px;top:812.0px;width:149px;height:26.0px;overflow:hidden"><div class="tx" style="left:5.50px;top:14.08px;font-size:11.6px;font-weight:normal;font-style:normal;color:#333333;-webkit-text-stroke:0.2px #333;transform:scaleX(1.0365);transform-origin:0 0"><span>Import dokumentacji pracowniczej</span></div></div>
<div style="left:395px;top:838.0px;width:95px;height:26.0px;overflow:hidden"><div class="tx" style="left:4.60px;top:14.08px;font-size:11.6px;font-weight:normal;font-style:normal;color:#333333;-webkit-text-stroke:0.2px #333;transform:scaleX(1.0883);transform-origin:0 0"><span>11</span></div></div>
<div style="left:490px;top:838.0px;width:131px;height:26.0px;overflow:hidden"><div class="tx" style="left:5.50px;top:14.08px;font-size:11.6px;font-weight:normal;font-style:normal;color:#333333;-webkit-text-stroke:0.2px #333;transform:scaleX(0.9759);transform-origin:0 0"><span>Kadry i Płace</span></div></div>
<div style="left:621px;top:838.0px;width:168px;height:26.0px;overflow:hidden"><div class="tx" style="left:5.50px;top:14.08px;font-size:11.6px;font-weight:normal;font-style:normal;color:#333333;-webkit-text-stroke:0.2px #333;transform:scaleX(1.0260);transform-origin:0 0"><span>Akta osobowe</span></div></div>
<div style="left:789px;top:838.0px;width:83px;height:26.0px;overflow:hidden"><div class="tx" style="left:5.50px;top:14.08px;font-size:11.6px;font-weight:normal;font-style:normal;color:#333333;-webkit-text-stroke:0.2px #333;transform:scaleX(0.9263);transform-origin:0 0"><span>Część A</span></div></div>
<div style="left:872px;top:838.0px;width:171px;height:26.0px;overflow:hidden"><div class="tx" style="left:5.50px;top:14.08px;font-size:11.6px;font-weight:normal;font-style:normal;color:#333333;-webkit-text-stroke:0.2px #333;transform:scaleX(0.9263);transform-origin:0 0"><span>Część A</span></div></div>
<div style="left:1043px;top:838.0px;width:162px;height:26.0px;overflow:hidden"><div class="tx" style="left:5.50px;top:14.08px;font-size:11.6px;font-weight:normal;font-style:normal;color:#333333;-webkit-text-stroke:0.2px #333;transform:scaleX(1.0386);transform-origin:0 0"><span>A/0005</span></div></div>
<div style="left:1205px;top:838.0px;width:411px;height:26.0px;overflow:hidden"><div class="tx" style="left:5.50px;top:14.08px;font-size:11.6px;font-weight:normal;font-style:normal;color:#333333;-webkit-text-stroke:0.2px #333;transform:scaleX(0.9785);transform-origin:0 0"><span>TECZKA_51244528_A_0004 A7_Florczyk Olga Wypowiedzenie umowy</span></div></div>
<div style="left:1616px;top:838.0px;width:141px;height:26.0px;overflow:hidden"><div class="tx" style="left:5.50px;top:14.08px;font-size:11.6px;font-weight:normal;font-style:normal;color:#333333;-webkit-text-stroke:0.2px #333;transform:scaleX(1.0033);transform-origin:0 0"><span>01.04.2025</span></div></div>
<div style="left:1757px;top:838.0px;width:149px;height:26.0px;overflow:hidden"><div class="tx" style="left:5.50px;top:14.08px;font-size:11.6px;font-weight:normal;font-style:normal;color:#333333;-webkit-text-stroke:0.2px #333;transform:scaleX(1.0365);transform-origin:0 0"><span>Import dokumentacji pracowniczej</span></div></div>
<div style="left:395px;top:864.0px;width:95px;height:26.0px;overflow:hidden"><div class="tx" style="left:4.60px;top:14.08px;font-size:11.6px;font-weight:normal;font-style:normal;color:#333333;-webkit-text-stroke:0.2px #333;transform:scaleX(1.0883);transform-origin:0 0"><span>11</span></div></div>
<div style="left:490px;top:864.0px;width:131px;height:26.0px;overflow:hidden"><div class="tx" style="left:5.50px;top:14.08px;font-size:11.6px;font-weight:normal;font-style:normal;color:#333333;-webkit-text-stroke:0.2px #333;transform:scaleX(0.9759);transform-origin:0 0"><span>Kadry i Płace</span></div></div>
<div style="left:621px;top:864.0px;width:168px;height:26.0px;overflow:hidden"><div class="tx" style="left:5.50px;top:14.08px;font-size:11.6px;font-weight:normal;font-style:normal;color:#333333;-webkit-text-stroke:0.2px #333;transform:scaleX(1.0260);transform-origin:0 0"><span>Akta osobowe</span></div></div>
<div style="left:789px;top:864.0px;width:83px;height:26.0px;overflow:hidden"><div class="tx" style="left:5.50px;top:14.08px;font-size:11.6px;font-weight:normal;font-style:normal;color:#333333;-webkit-text-stroke:0.2px #333;transform:scaleX(0.9263);transform-origin:0 0"><span>Część A</span></div></div>
<div style="left:872px;top:864.0px;width:171px;height:26.0px;overflow:hidden"><div class="tx" style="left:5.50px;top:14.08px;font-size:11.6px;font-weight:normal;font-style:normal;color:#333333;-webkit-text-stroke:0.2px #333;transform:scaleX(0.9263);transform-origin:0 0"><span>Część A</span></div></div>
<div style="left:1043px;top:864.0px;width:162px;height:26.0px;overflow:hidden"><div class="tx" style="left:5.50px;top:14.08px;font-size:11.6px;font-weight:normal;font-style:normal;color:#333333;-webkit-text-stroke:0.2px #333;transform:scaleX(1.0386);transform-origin:0 0"><span>A/0007</span></div></div>
<div style="left:1205px;top:864.0px;width:411px;height:26.0px;overflow:hidden"><div class="tx" style="left:5.50px;top:14.08px;font-size:11.6px;font-weight:normal;font-style:normal;color:#333333;-webkit-text-stroke:0.2px #333;transform:scaleX(0.9668);transform-origin:0 0"><span>TECZKA_51244528_A_0007 A4_Florczyk Olga Świadectwo pracy</span></div></div>
<div style="left:1616px;top:864.0px;width:141px;height:26.0px;overflow:hidden"><div class="tx" style="left:5.50px;top:14.08px;font-size:11.6px;font-weight:normal;font-style:normal;color:#333333;-webkit-text-stroke:0.2px #333;transform:scaleX(1.0033);transform-origin:0 0"><span>01.04.2025</span></div></div>
<div style="left:1757px;top:864.0px;width:149px;height:26.0px;overflow:hidden"><div class="tx" style="left:5.50px;top:14.08px;font-size:11.6px;font-weight:normal;font-style:normal;color:#333333;-webkit-text-stroke:0.2px #333;transform:scaleX(1.0365);transform-origin:0 0"><span>Import dokumentacji pracowniczej</span></div></div>
<div style="left:369px;top:954.8px;width:1537px;height:15.5px;background:#fafafa;border-top:1.5px solid #cacaca;border-bottom:1.5px solid #cacaca"></div>
<div style="left:382px;top:954.8px;width:1.3px;height:15.5px;background:#cfcfcf"></div>
<div style="left:1437px;top:954.8px;width:453px;height:15.5px;background:#dadada"></div>
<div style="left:1890px;top:954.8px;width:1.3px;height:15.5px;background:#cfcfcf"></div>
<svg style="position:absolute;left:371px;top:958px" width="8" height="9" viewBox="0 0 8 9"><path d="M5.8 1.8 L1.8 4.6 L5.8 7.4 Z" fill="#4a4a4a"/></svg>
<svg style="position:absolute;left:1894px;top:958px" width="8" height="9" viewBox="0 0 8 9"><path d="M2 1.8 L6 4.6 L2 7.4 Z" fill="#4a4a4a"/></svg>
<div style="left:422.9px;top:973.6px;width:23.4px;height:23.5px;background:#7db3e5;border:1px solid #5a90c4;border-radius:2px"></div>
<div class="tx" style="left:430.77px;top:985.38px;font-size:11.6px;font-weight:normal;font-style:normal;color:#16314f"><span>1</span></div>
<svg style="position:absolute;left:376px;top:980px" width="120" height="12" viewBox="0 0 120 12"><path d="M3.5 2 V10" stroke="#dcdcdc" stroke-width="1.5"/><path d="M10.5 2 L4.5 6 L10.5 10 Z" fill="#dcdcdc"/><path d="M36 2 L29 6 L36 10 Z" fill="#dcdcdc"/><path d="M81 2 L88 6 L81 10 Z" fill="#dcdcdc"/><path d="M107 2 L113 6 L107 10 Z" fill="#dcdcdc"/><path d="M114 2 V10" stroke="#dcdcdc" stroke-width="1.5"/></svg>
<div class="tx" style="left:1818.14px;top:985.98px;font-size:11.6px;font-weight:normal;font-style:normal;color:#333;transform:scaleX(1.0063);transform-origin:0 0"><span>Strona</span></div>
<div class="tx" style="left:1864.38px;top:985.98px;font-size:11.6px;font-weight:normal;font-style:normal;color:#333"><span>1</span></div>
<div class="tx" style="left:1882.63px;top:985.98px;font-size:11.6px;font-weight:normal;font-style:normal;color:#333;transform:scaleX(1.0108);transform-origin:0 0"><span>z 1</span></div>
<div style="left:368px;top:999.5px;width:1539px;height:2.5px;background:#d6d6d6"></div>
</body></html>
